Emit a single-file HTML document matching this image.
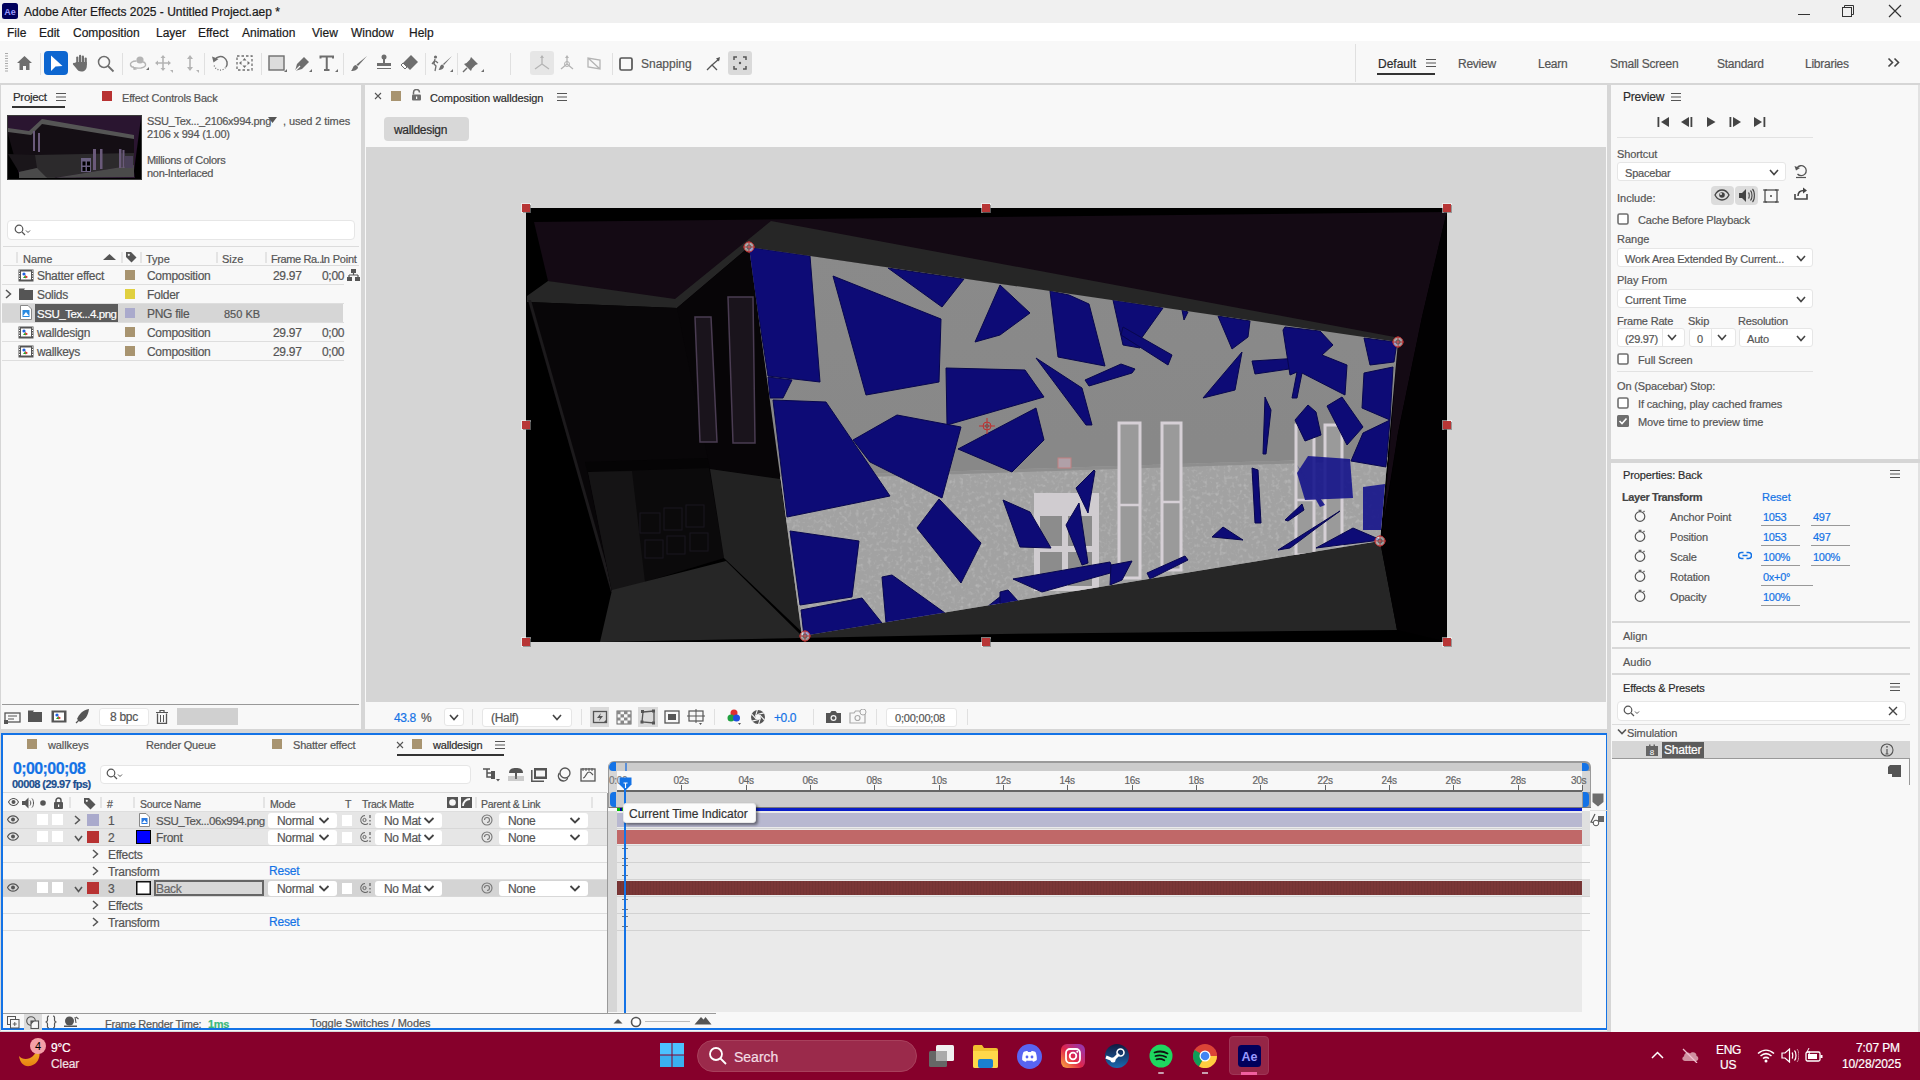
<!DOCTYPE html><html><head><meta charset="utf-8"><title>AE</title><style>
*{margin:0;padding:0;box-sizing:border-box}
html,body{width:1920px;height:1080px;overflow:hidden;background:#d6d6d6;font-family:"Liberation Sans",sans-serif}
.a{position:absolute}
.t{position:absolute;white-space:nowrap;line-height:1.15;-webkit-text-stroke:0.2px currentColor}
</style></head><body><div class="a" style="left:0px;top:0px;width:1920px;height:23px;background:#f0f0f0;"></div>
<svg class="a" style="left:2px;top:3px;" width="16" height="16" viewBox="0 0 16 16"><rect x="0" y="0" width="16" height="16" rx="2.5" fill="#00005b"/><text x="8" y="12" font-size="9" font-weight="bold" fill="#9999ff" text-anchor="middle" font-family="Liberation Sans">Ae</text></svg>
<div class="t" style="left:24px;top:5.5px;font-size:12px;color:#1a1a1a;">Adobe After Effects 2025 - Untitled Project.aep *</div>
<svg class="a" style="left:1797px;top:4px;" width="14" height="14" viewBox="0 0 14 14"><path d="M1 10.5H13" stroke="#333" stroke-width="1"/></svg>
<svg class="a" style="left:1841px;top:4px;" width="14" height="14" viewBox="0 0 14 14"><rect x="1.5" y="3.5" width="9" height="9" fill="none" stroke="#333"/><path d="M3.5 3.5V1.5H12.5V10.5H10.5" fill="none" stroke="#333"/></svg>
<svg class="a" style="left:1887px;top:3px;" width="16" height="16" viewBox="0 0 16 16"><path d="M2 2L14 14M14 2L2 14" stroke="#333" stroke-width="1.2"/></svg>
<div class="a" style="left:0px;top:23px;width:1920px;height:18px;background:#ffffff;"></div>
<div class="t" style="left:7px;top:27.0px;font-size:12px;color:#1a1a1a;">File</div>
<div class="t" style="left:39px;top:27.0px;font-size:12px;color:#1a1a1a;">Edit</div>
<div class="t" style="left:73px;top:27.0px;font-size:12px;color:#1a1a1a;">Composition</div>
<div class="t" style="left:156px;top:27.0px;font-size:12px;color:#1a1a1a;">Layer</div>
<div class="t" style="left:198px;top:27.0px;font-size:12px;color:#1a1a1a;">Effect</div>
<div class="t" style="left:242px;top:27.0px;font-size:12px;color:#1a1a1a;">Animation</div>
<div class="t" style="left:312px;top:27.0px;font-size:12px;color:#1a1a1a;">View</div>
<div class="t" style="left:351px;top:27.0px;font-size:12px;color:#1a1a1a;">Window</div>
<div class="t" style="left:409px;top:27.0px;font-size:12px;color:#1a1a1a;">Help</div>
<div class="a" style="left:0px;top:41px;width:1920px;height:42px;background:#f8f8f8;"></div>
<div class="a" style="left:0px;top:83px;width:1920px;height:2px;background:#d6d6d6;"></div>
<svg class="a" style="left:5px;top:53px;" width="4" height="20" viewBox="0 0 4 20"><rect x="0" y="0.0" width="3" height="1" fill="#aaa"/><rect x="0" y="2.5" width="3" height="1" fill="#aaa"/><rect x="0" y="5.0" width="3" height="1" fill="#aaa"/><rect x="0" y="7.5" width="3" height="1" fill="#aaa"/><rect x="0" y="10.0" width="3" height="1" fill="#aaa"/><rect x="0" y="12.5" width="3" height="1" fill="#aaa"/><rect x="0" y="15.0" width="3" height="1" fill="#aaa"/><rect x="0" y="17.5" width="3" height="1" fill="#aaa"/></svg>
<svg class="a" style="left:16px;top:55px;" width="17" height="16" viewBox="0 0 17 16"><path d="M8.5 1L1 8H3.5V15H7V11H10V15H13.5V8H16Z" fill="#6e6e6e"/></svg>
<div class="a" style="left:40px;top:53px;width:1px;height:22px;background:#e0e0e0;"></div>
<svg class="a" style="left:44px;top:51px;" width="24" height="24" viewBox="0 0 24 24"><rect width="24" height="24" rx="4" fill="#0d66d0"/><path d="M7 4.5V20L11.5 15.5L18.5 15Z" fill="#fff"/></svg>
<svg class="a" style="left:72px;top:54px;" width="17" height="18" viewBox="0 0 17 18"><g fill="#6e6e6e"><rect x="4.2" y="2.5" width="2.2" height="8" rx="1.1"/><rect x="7" y="0.8" width="2.2" height="9" rx="1.1"/><rect x="9.8" y="1.5" width="2.2" height="9" rx="1.1"/><rect x="12.6" y="3.5" width="2.2" height="8" rx="1.1"/><path d="M4.2 8H14.8V12C14.8 15.5 12.5 17.5 9.5 17.5C7 17.5 5.5 16.5 4 14L1 10.5A1.2 1.2 0 0 1 2.8 9Z"/></g></svg>
<svg class="a" style="left:97px;top:55px;" width="18" height="18" viewBox="0 0 18 18"><circle cx="7" cy="7" r="5.5" fill="none" stroke="#6e6e6e" stroke-width="1.5"/><path d="M11 11L16.5 16.5" stroke="#6e6e6e" stroke-width="1.8"/></svg>
<div class="a" style="left:122px;top:53px;width:1px;height:22px;background:#e0e0e0;"></div>
<svg class="a" style="left:129px;top:55px;" width="20" height="18" viewBox="0 0 20 18"><circle cx="11" cy="5" r="3.6" fill="#b4b4b4"/><path d="M7.5 6C3 6 1 8 1.5 10C2 12.5 7 13.5 12 13C15.5 12.5 17 11 16.5 9C16 7.5 14.5 7 14 7" fill="none" stroke="#b4b4b4" stroke-width="1.4"/><path d="M4 11L8 14.5L4.5 15Z" fill="#b4b4b4"/><path d="M17 15L20 15L20 12Z" fill="#6e6e6e"/></svg>
<svg class="a" style="left:155px;top:55px;" width="18" height="18" viewBox="0 0 18 18"><path d="M8 1V15M1 8H15" stroke="#b4b4b4" stroke-width="1.6"/><path d="M8 0L5.5 3H10.5ZM8 16L5.5 13H10.5ZM0 8L3 5.5V10.5ZM16 8L13 5.5V10.5Z" fill="#b4b4b4"/><path d="M15 15L18 15L18 18Z" fill="#b4b4b4"/></svg>
<svg class="a" style="left:183px;top:55px;" width="16" height="18" viewBox="0 0 16 18"><path d="M7 2V14" stroke="#b4b4b4" stroke-width="1.6"/><path d="M7 0L4 4H10ZM7 16L4 12H10Z" fill="#b4b4b4"/><path d="M13 15L16 15L16 18Z" fill="#b4b4b4"/></svg>
<div class="a" style="left:204px;top:53px;width:1px;height:22px;background:#e0e0e0;"></div>
<svg class="a" style="left:211px;top:54px;" width="18" height="18" viewBox="0 0 18 18"><path d="M4 5.5A6.5 6.5 0 1 1 15 13" fill="none" stroke="#6e6e6e" stroke-width="1.5"/><path d="M14.5 13.5A6.5 6.5 0 0 1 3 11" fill="none" stroke="#6e6e6e" stroke-width="1.2" stroke-dasharray="1 1.6"/><path d="M1 2.5L2.5 8.5L7.5 5Z" fill="#6e6e6e"/></svg>
<svg class="a" style="left:236px;top:55px;" width="18" height="17" viewBox="0 0 18 17"><rect x="1" y="1" width="15" height="14" fill="none" stroke="#6e6e6e" stroke-width="1.3" stroke-dasharray="2.5 2"/><path d="M8.5 3L6.5 5.5H10.5ZM8.5 13L6.5 10.5H10.5ZM3 8L5.5 6V10ZM14 8L11.5 6V10Z" fill="#6e6e6e"/></svg>
<div class="a" style="left:261px;top:53px;width:1px;height:22px;background:#e0e0e0;"></div>
<svg class="a" style="left:268px;top:55px;" width="19" height="18" viewBox="0 0 19 18"><rect x="1" y="1" width="15" height="14" fill="#dcdcdc" stroke="#6e6e6e" stroke-width="1.4"/><path d="M16 17L19 17L19 14Z" fill="#6e6e6e"/></svg>
<svg class="a" style="left:293px;top:55px;" width="19" height="18" viewBox="0 0 19 18"><path d="M2 16L4 9L11 2L16 7L9 14Z" fill="#6e6e6e"/><path d="M2 16L7 11" stroke="#f8f8f8" stroke-width="1.2"/><path d="M16 17L19 17L19 14Z" fill="#6e6e6e"/></svg>
<svg class="a" style="left:319px;top:55px;" width="19" height="18" viewBox="0 0 19 18"><path d="M1.5 3.5V1.5H14V3.5M7.75 1.5V15M5 15H10.5" fill="none" stroke="#6e6e6e" stroke-width="2"/><path d="M16 17L19 17L19 14Z" fill="#6e6e6e"/></svg>
<div class="a" style="left:343px;top:53px;width:1px;height:22px;background:#e0e0e0;"></div>
<svg class="a" style="left:350px;top:55px;" width="18" height="18" viewBox="0 0 18 18"><path d="M17 1L8 11L6.5 9.5Z" fill="#6e6e6e"/><path d="M6 10C3 10 3 14 1 16C5 16 8 14.5 8 12Z" fill="#6e6e6e"/></svg>
<svg class="a" style="left:375px;top:54px;" width="18" height="18" viewBox="0 0 18 18"><circle cx="9" cy="3" r="2.5" fill="#6e6e6e"/><path d="M9 4V9" stroke="#6e6e6e" stroke-width="2"/><rect x="2" y="9" width="14" height="3" fill="#6e6e6e"/><path d="M2 14.5H16" stroke="#6e6e6e" stroke-width="1"/></svg>
<svg class="a" style="left:400px;top:54px;" width="19" height="18" viewBox="0 0 19 18"><path d="M11 1L18 8L10 16L3 9Z" fill="#6e6e6e"/><path d="M3 9L7 13L5 15L1 11Z" fill="#fff" stroke="#6e6e6e" stroke-width="1"/></svg>
<div class="a" style="left:425px;top:53px;width:1px;height:22px;background:#e0e0e0;"></div>
<svg class="a" style="left:431px;top:55px;" width="22" height="18" viewBox="0 0 22 18"><circle cx="4.5" cy="2" r="1.6" fill="#6e6e6e"/><path d="M4 4L3 9L5 11L4 16M3.5 6L1 9M4.5 6L7 8" stroke="#6e6e6e" stroke-width="1.3" fill="none"/><path d="M21 1L13 10L12 9Z" fill="#6e6e6e"/><path d="M11.5 9.5C9 9.5 9 13 7.5 15C11 15 13 13.5 13 11Z" fill="#6e6e6e"/><path d="M19 17L22 17L22 14Z" fill="#6e6e6e"/></svg>
<div class="a" style="left:457px;top:53px;width:1px;height:22px;background:#e0e0e0;"></div>
<svg class="a" style="left:462px;top:55px;" width="22" height="18" viewBox="0 0 22 18"><path d="M9 2L16 9L13.5 10L10 13.5L9 16L2 9L4.5 8L8 4.5Z" fill="#6e6e6e" transform="rotate(0)"/><path d="M5 13L1 17" stroke="#6e6e6e" stroke-width="1.5"/><path d="M19 17L22 17L22 14Z" fill="#6e6e6e"/></svg>
<div class="a" style="left:510px;top:53px;width:1px;height:22px;background:#e0e0e0;"></div>
<svg class="a" style="left:530px;top:51px;" width="24" height="24" viewBox="0 0 24 24"><rect width="24" height="24" rx="3" fill="#e6e6e6"/><path d="M12 5V13L5 18M12 13L19 18" stroke="#b4b4b4" stroke-width="1.3" fill="none"/><path d="M12 4L10 7H14Z" fill="#b4b4b4"/></svg>
<svg class="a" style="left:558px;top:54px;" width="18" height="18" viewBox="0 0 18 18"><path d="M9 3V10L3 15M9 10L15 15" stroke="#b4b4b4" stroke-width="1.3" fill="none"/><circle cx="9" cy="10" r="2.5" fill="none" stroke="#b4b4b4"/><path d="M9 1L7 4H11Z" fill="#b4b4b4"/></svg>
<svg class="a" style="left:585px;top:55px;" width="18" height="17" viewBox="0 0 18 17"><path d="M3 3L15 14M3 3V12L15 14V5Z" stroke="#b4b4b4" stroke-width="1.3" fill="none"/></svg>
<div class="a" style="left:612px;top:53px;width:1px;height:22px;background:#e0e0e0;"></div>
<svg class="a" style="left:619px;top:57px;" width="14" height="14" viewBox="0 0 14 14"><rect x="1" y="1" width="12" height="12" rx="1.5" fill="none" stroke="#555" stroke-width="1.7"/></svg>
<div class="t" style="left:641px;top:58.0px;font-size:12px;color:#555;">Snapping</div>
<svg class="a" style="left:706px;top:56px;" width="16" height="16" viewBox="0 0 16 16"><path d="M1 14L6 9L11 14M6 9L13 3" stroke="#555" stroke-width="1.3" fill="none"/><path d="M14 1L10 2.5L13 5.5Z" fill="#555"/></svg>
<svg class="a" style="left:728px;top:51px;" width="24" height="24" viewBox="0 0 24 24"><rect width="24" height="24" rx="3" fill="#dadada"/><path d="M6 9V6H9M15 6H18V9M18 15V18H15M9 18H6V15" stroke="#555" stroke-width="1.5" fill="none"/><circle cx="12" cy="12" r="1.2" fill="#555"/></svg>
<div class="a" style="left:1355px;top:44px;width:1px;height:38px;background:#e0e0e0;"></div>
<div class="t" style="left:1378px;top:58.0px;font-size:12px;color:#2c2c2c;">Default</div>
<svg class="a" style="left:1426px;top:58px;" width="10" height="10" viewBox="0 0 10 10"><path d="M0 1.5H10M0 5H10M0 8.5H10" stroke="#555" stroke-width="1.2"/></svg>
<div class="a" style="left:1377px;top:73px;width:58px;height:2px;background:#333;"></div>
<div class="t" style="left:1458px;top:58.0px;font-size:12px;color:#555;letter-spacing:-0.25px">Review</div>
<div class="t" style="left:1538px;top:58.0px;font-size:12px;color:#555;letter-spacing:-0.25px">Learn</div>
<div class="t" style="left:1610px;top:58.0px;font-size:12px;color:#555;letter-spacing:-0.25px">Small Screen</div>
<div class="t" style="left:1717px;top:58.0px;font-size:12px;color:#555;letter-spacing:-0.25px">Standard</div>
<div class="t" style="left:1805px;top:58.0px;font-size:12px;color:#555;letter-spacing:-0.25px">Libraries</div>
<svg class="a" style="left:1887px;top:57px;" width="13" height="12" viewBox="0 0 13 12"><path d="M1.5 1.5L5.5 5.5L1.5 9.5M7.5 1.5L11.5 5.5L7.5 9.5" stroke="#444" stroke-width="1.6" fill="none"/></svg>
<div class="a" style="left:1px;top:85px;width:360px;height:644px;background:#f8f8f8;"></div>
<div class="a" style="left:365px;top:85px;width:1242px;height:644px;background:#f8f8f8;"></div>
<div class="a" style="left:1611px;top:85px;width:309px;height:374px;background:#f8f8f8;"></div>
<div class="a" style="left:1611px;top:463px;width:309px;height:569px;background:#f8f8f8;"></div>
<div class="a" style="left:1918px;top:85px;width:2px;height:947px;background:#e2e2e2;"></div>
<div class="a" style="left:1px;top:733px;width:1606px;height:298px;background:#f8f8f8;"></div>
<div class="a" style="left:0px;top:1032px;width:1920px;height:48px;background:#86002b;"></div>
<div class="t" style="left:13px;top:91.3px;font-size:11.5px;color:#2c2c2c;letter-spacing:-0.3px">Project</div>
<svg class="a" style="left:56px;top:92px;" width="10" height="10" viewBox="0 0 10 10"><path d="M0 1.5H10M0 5H10M0 8.5H10" stroke="#555" stroke-width="1.2"/></svg>
<div class="a" style="left:12px;top:106px;width:53px;height:2px;background:#333;"></div>
<div class="a" style="left:102px;top:91px;width:10px;height:10px;background:#b83232;"></div>
<div class="t" style="left:122px;top:91.5px;font-size:11px;color:#555;letter-spacing:-0.2px">Effect Controls Back</div>
<svg class="a" style="left:7px;top:115px;" width="135" height="65" viewBox="0 0 135 65"><rect x="0" y="0" width="135" height="65" fill="#3a3a3a"/>
<g transform="translate(1,1)">
<rect x="0" y="0" width="133" height="63" fill="#2a1530"/>
<polygon points="0,14 21,16 34,5 126,21 126,40 27,40 0,40" fill="#140e14"/>
<polygon points="0,12 21,15 34,3 126,19 126,23 34,8 23,19 0,16" fill="#555"/>
<polygon points="27,39 126,37 126,49 40,63 11,56" fill="#2c2a2c"/>
<polygon points="0,18 11,58 11,63 0,63" fill="#000"/>
<polygon points="0,38 27,39 29,52 11,56" fill="#1a161a"/>
<polygon points="11,56 29,52 40,63 126,49 126,61 11,62" fill="#4a4a4a"/><rect x="0" y="62" width="133" height="1" fill="#000"/>
<polygon points="133,2 133,63 127,63 126,55" fill="#000"/>
<g fill="#6a5a7a"><rect x="85" y="33" width="3" height="21"/><rect x="92" y="33" width="2.5" height="20"/><rect x="111" y="33" width="2.5" height="19"/><rect x="114.5" y="34" width="2" height="18"/><rect x="25" y="15" width="2" height="20"/><rect x="30" y="17" width="2" height="19"/></g>
<rect x="73" y="42" width="10" height="14" fill="#6a6080"/><rect x="74.5" y="45.5" width="3" height="4" fill="#000"/><rect x="79" y="45.5" width="3" height="4" fill="#000"/><rect x="74.5" y="51" width="3" height="4" fill="#000"/><rect x="79" y="51" width="3" height="4" fill="#000"/>
<rect x="117" y="40" width="8" height="12" fill="#4a4058"/>
</g></svg>
<div class="t" style="left:147px;top:114.5px;font-size:11px;color:#555;letter-spacing:-0.3px">SSU_Tex..._2106x994.png</div>
<svg class="a" style="left:268px;top:117px;" width="9" height="6" viewBox="0 0 9 6"><path d="M0 0H9L4.5 6Z" fill="#555"/></svg>
<div class="t" style="left:283px;top:114.5px;font-size:11px;color:#555;letter-spacing:-0.1px">, used 2 times</div>
<div class="t" style="left:147px;top:127.5px;font-size:11px;color:#555;letter-spacing:-0.2px">2106 x 994 (1.00)</div>
<div class="t" style="left:147px;top:153.5px;font-size:11px;color:#555;letter-spacing:-0.3px">Millions of Colors</div>
<div class="t" style="left:147px;top:166.5px;font-size:11px;color:#555;letter-spacing:-0.3px">non-Interlaced</div>
<div class="a" style="left:7px;top:220px;width:348px;height:20px;background:#fff;border:1px solid #e6e6e6;border-radius:4px"></div>
<svg class="a" style="left:14px;top:224px;" width="20" height="12" viewBox="0 0 20 12"><circle cx="5" cy="5" r="3.8" fill="none" stroke="#555" stroke-width="1.2"/><path d="M8 8L11 11" stroke="#555" stroke-width="1.2"/><path d="M12 6.5L14 8.5L16 6.5" stroke="#555" fill="none"/></svg>
<div class="a" style="left:3px;top:246px;width:356px;height:1px;background:#dcdcdc;"></div>
<div class="a" style="left:16px;top:252px;width:2px;height:11px;background:#e4e4e4;"></div>
<div class="a" style="left:121px;top:252px;width:2px;height:11px;background:#e4e4e4;"></div>
<div class="a" style="left:140px;top:252px;width:2px;height:11px;background:#e4e4e4;"></div>
<div class="a" style="left:216px;top:252px;width:2px;height:11px;background:#e4e4e4;"></div>
<div class="a" style="left:265px;top:252px;width:2px;height:11px;background:#e4e4e4;"></div>
<div class="t" style="left:23px;top:252.5px;font-size:11px;color:#555;">Name</div>
<svg class="a" style="left:103px;top:254px;" width="13" height="6" viewBox="0 0 13 6"><path d="M0 6L6.5 0L13 6Z" fill="#555"/></svg>
<svg class="a" style="left:125px;top:251px;" width="12" height="12" viewBox="0 0 12 12"><path d="M1 1H6L11.5 6.5L6.5 11.5L1 6Z" fill="#555"/><circle cx="3.8" cy="3.8" r="1.1" fill="#f8f8f8"/></svg>
<div class="t" style="left:146px;top:252.5px;font-size:11px;color:#555;">Type</div>
<div class="t" style="left:222px;top:252.5px;font-size:11px;color:#555;">Size</div>
<div class="t" style="left:271px;top:252.5px;font-size:11px;color:#555;letter-spacing:-0.4px">Frame Ra...</div>
<div class="t" style="left:321px;top:252.5px;font-size:11px;color:#555;letter-spacing:-0.2px">In Point</div>
<div class="a" style="left:3px;top:265px;width:356px;height:1px;background:#dcdcdc;"></div>
<div class="a" style="left:2px;top:304px;width:341px;height:18px;background:#d6d6d6;"></div>
<svg class="a" style="left:18px;top:269px;" width="16" height="13" viewBox="0 0 16 13"><rect x="0.5" y="0.5" width="15" height="12" fill="#555"/><rect x="3" y="2.5" width="10" height="8" fill="#fff"/><path d="M1.5 1.5v1M1.5 4v1M1.5 6.5v1M1.5 9v1M14.5 1.5v1M14.5 4v1M14.5 6.5v1M14.5 9v1" stroke="#fff"/><circle cx="6" cy="5" r="1.6" fill="#2060e0"/><path d="M7 6L10 8L7.5 9.5Z" fill="#e02020"/><path d="M5 9L7 6.5L8 9Z" fill="#20a020"/></svg>
<div class="t" style="left:37px;top:269.5px;font-size:12px;color:#555;letter-spacing:-0.3px">Shatter effect</div>
<div class="a" style="left:125px;top:270px;width:10px;height:10px;background:#a89470;"></div>
<div class="t" style="left:147px;top:269.5px;font-size:12px;color:#555;letter-spacing:-0.3px">Composition</div>
<div class="t" style="left:273px;top:269.5px;font-size:12px;color:#555;letter-spacing:-0.3px">29.97</div>
<div class="t" style="left:322px;top:269.5px;font-size:12px;color:#555;letter-spacing:-0.3px">0;00</div>
<div class="a" style="left:2px;top:284px;width:342px;height:1px;background:#dedede;"></div>
<svg class="a" style="left:19px;top:288px;" width="14" height="12" viewBox="0 0 14 12"><path d="M0 2H5L6 0.5H0ZM0 2H14V12H0Z" fill="#555"/></svg>
<svg class="a" style="left:4px;top:289px;" width="8" height="10" viewBox="0 0 8 10"><path d="M2 1L6.5 5L2 9" stroke="#555" stroke-width="1.5" fill="none"/></svg>
<div class="t" style="left:37px;top:288.5px;font-size:12px;color:#555;letter-spacing:-0.3px">Solids</div>
<div class="a" style="left:125px;top:289px;width:10px;height:10px;background:#e0d040;"></div>
<div class="t" style="left:147px;top:288.5px;font-size:12px;color:#555;letter-spacing:-0.3px">Folder</div>
<div class="a" style="left:2px;top:303px;width:342px;height:1px;background:#dedede;"></div>
<svg class="a" style="left:20px;top:305px;" width="12" height="15" viewBox="0 0 12 15"><path d="M0.5 0.5H8L11.5 4V14.5H0.5Z" fill="#fff" stroke="#888"/><rect x="2.5" y="5" width="7" height="7" fill="#2a8ae0"/><path d="M3 11L6 7L9 11Z" fill="#fff"/></svg>
<div class="a" style="left:35px;top:304px;width:83px;height:18px;background:#5c5c5c;"></div>
<div class="t" style="left:37px;top:307.8px;font-size:11.5px;color:#fff;letter-spacing:-0.45px">SSU_Tex...4.png</div>
<div class="a" style="left:125px;top:308px;width:10px;height:10px;background:#aaaacc;"></div>
<div class="t" style="left:147px;top:307.5px;font-size:12px;color:#555;letter-spacing:-0.3px">PNG file</div>
<div class="t" style="left:224px;top:308.0px;font-size:11px;color:#555;">850 KB</div>
<div class="a" style="left:2px;top:322px;width:342px;height:1px;background:#dedede;"></div>
<svg class="a" style="left:18px;top:326px;" width="16" height="13" viewBox="0 0 16 13"><rect x="0.5" y="0.5" width="15" height="12" fill="#555"/><rect x="3" y="2.5" width="10" height="8" fill="#fff"/><path d="M1.5 1.5v1M1.5 4v1M1.5 6.5v1M1.5 9v1M14.5 1.5v1M14.5 4v1M14.5 6.5v1M14.5 9v1" stroke="#fff"/><circle cx="6" cy="5" r="1.6" fill="#2060e0"/><path d="M7 6L10 8L7.5 9.5Z" fill="#e02020"/><path d="M5 9L7 6.5L8 9Z" fill="#20a020"/></svg>
<div class="t" style="left:37px;top:326.5px;font-size:12px;color:#555;letter-spacing:-0.3px">walldesign</div>
<div class="a" style="left:125px;top:327px;width:10px;height:10px;background:#a89470;"></div>
<div class="t" style="left:147px;top:326.5px;font-size:12px;color:#555;letter-spacing:-0.3px">Composition</div>
<div class="t" style="left:273px;top:326.5px;font-size:12px;color:#555;letter-spacing:-0.3px">29.97</div>
<div class="t" style="left:322px;top:326.5px;font-size:12px;color:#555;letter-spacing:-0.3px">0;00</div>
<div class="a" style="left:2px;top:341px;width:342px;height:1px;background:#dedede;"></div>
<svg class="a" style="left:18px;top:345px;" width="16" height="13" viewBox="0 0 16 13"><rect x="0.5" y="0.5" width="15" height="12" fill="#555"/><rect x="3" y="2.5" width="10" height="8" fill="#fff"/><path d="M1.5 1.5v1M1.5 4v1M1.5 6.5v1M1.5 9v1M14.5 1.5v1M14.5 4v1M14.5 6.5v1M14.5 9v1" stroke="#fff"/><circle cx="6" cy="5" r="1.6" fill="#2060e0"/><path d="M7 6L10 8L7.5 9.5Z" fill="#e02020"/><path d="M5 9L7 6.5L8 9Z" fill="#20a020"/></svg>
<div class="t" style="left:37px;top:345.5px;font-size:12px;color:#555;letter-spacing:-0.3px">wallkeys</div>
<div class="a" style="left:125px;top:346px;width:10px;height:10px;background:#a89470;"></div>
<div class="t" style="left:147px;top:345.5px;font-size:12px;color:#555;letter-spacing:-0.3px">Composition</div>
<div class="t" style="left:273px;top:345.5px;font-size:12px;color:#555;letter-spacing:-0.3px">29.97</div>
<div class="t" style="left:322px;top:345.5px;font-size:12px;color:#555;letter-spacing:-0.3px">0;00</div>
<div class="a" style="left:2px;top:360px;width:342px;height:1px;background:#dedede;"></div>
<svg class="a" style="left:347px;top:269px;" width="13" height="12" viewBox="0 0 13 12"><rect x="4" y="0" width="5" height="4" fill="#555"/><path d="M6.5 4V6M2 6H11M2 6V8M11 6V8" stroke="#555" stroke-width="1.2" fill="none"/><rect x="0" y="8" width="5" height="4" fill="#555"/><rect x="8" y="8" width="5" height="4" fill="#555"/></svg>
<div class="a" style="left:2px;top:704px;width:357px;height:1px;background:#999;"></div>
<svg class="a" style="left:4px;top:710px;" width="17" height="14" viewBox="0 0 17 14"><rect x="1" y="3" width="15" height="9" fill="none" stroke="#555" stroke-width="1.3"/><path d="M4 6H13M4 9H10" stroke="#555"/><rect x="0" y="10" width="4" height="4" fill="#555"/></svg>
<svg class="a" style="left:28px;top:710px;" width="14" height="12" viewBox="0 0 14 12"><path d="M0 2H5L6 0.5H0ZM0 2H14V12H0Z" fill="#555"/></svg>
<svg class="a" style="left:51px;top:710px;" width="16" height="13" viewBox="0 0 16 13"><rect x="0.5" y="0.5" width="15" height="12" fill="#555"/><rect x="3" y="2.5" width="10" height="8" fill="#fff"/><circle cx="6" cy="5" r="1.6" fill="#2060e0"/><path d="M7 6L10 8L7.5 9.5Z" fill="#e02020"/><path d="M5 9L7 6.5L8 9Z" fill="#20a020"/></svg>
<svg class="a" style="left:75px;top:709px;" width="15" height="15" viewBox="0 0 15 15"><path d="M14 0C8 1 4 5 2 10L5 13C10 11 13 7 14 0Z" fill="#555"/><path d="M1 14L4 11" stroke="#555" stroke-width="1.3"/></svg>
<div class="a" style="left:99px;top:708px;width:50px;height:18px;background:#fff;border:1px solid #e8e8e8;border-radius:3px"></div>
<div class="t" style="left:110px;top:711.0px;font-size:12px;color:#555;letter-spacing:-0.3px">8 bpc</div>
<svg class="a" style="left:156px;top:710px;" width="12" height="14" viewBox="0 0 12 14"><path d="M0 2.5H12M4 2.5V0.5H8V2.5" stroke="#555" stroke-width="1.2" fill="none"/><path d="M1.5 3.5V13.5H10.5V3.5" stroke="#555" stroke-width="1.3" fill="none"/><path d="M4.5 5V12M7.5 5V12" stroke="#555"/></svg>
<div class="a" style="left:177px;top:708px;width:61px;height:17px;background:#d0d0d0;"></div>
<svg class="a" style="left:374px;top:92px;" width="8" height="8" viewBox="0 0 8 8"><path d="M1 1L7 7M7 1L1 7" stroke="#555" stroke-width="1.1"/></svg>
<div class="a" style="left:391px;top:91px;width:10px;height:10px;background:#a89470;"></div>
<svg class="a" style="left:411px;top:89px;" width="11" height="12" viewBox="0 0 11 12"><path d="M2.5 5.5V3.5a3 3 0 0 1 6 0" stroke="#6e6e6e" stroke-width="1.5" fill="none"/><rect x="1" y="5.5" width="9" height="6" rx="1" fill="#6e6e6e"/><rect x="5" y="7.5" width="1.2" height="2.5" fill="#f8f8f8"/></svg>
<div class="t" style="left:430px;top:91.5px;font-size:11px;color:#2c2c2c;letter-spacing:-0.1px">Composition walldesign</div>
<svg class="a" style="left:557px;top:92px;" width="10" height="10" viewBox="0 0 10 10"><path d="M0 1.5H10M0 5H10M0 8.5H10" stroke="#555" stroke-width="1.2"/></svg>
<div class="a" style="left:384px;top:117px;width:85px;height:24px;background:#d8d8d8;border-radius:4px"></div>
<div class="t" style="left:394px;top:123.5px;font-size:12px;color:#2c2c2c;letter-spacing:-0.3px">walldesign</div>
<div class="a" style="left:366px;top:147px;width:1240px;height:555px;background:#d5d5d5;"></div>
<svg class="a" style="left:526px;top:208px;overflow:hidden" width="921" height="434" viewBox="526 208 921 434"><defs>
<linearGradient id="wg" x1="0" y1="247" x2="0" y2="636" gradientUnits="userSpaceOnUse">
<stop offset="0" stop-color="#8a8a8a"/><stop offset="0.5" stop-color="#888888"/><stop offset="1" stop-color="#888888"/></linearGradient>
<filter id="nz" x="0" y="0" width="100%" height="100%"><feTurbulence type="fractalNoise" baseFrequency="0.25" numOctaves="2" seed="4"/><feColorMatrix type="matrix" values="0 0 0 0 1  0 0 0 0 1  0 0 0 0 1  0 0 0 2.2 -1.1"/><feComposite in2="SourceGraphic" operator="in"/></filter>
<clipPath id="wc"><polygon points="749,247 1398,342 1380,541 802,636"/></clipPath>
</defs>
<rect x="526" y="208" width="921" height="434" fill="#000"/>
<polygon points="534,222 1447,212 1446,215 1422,317 1398,433 1384,520 1398,342 749,247 677,308 548,281" fill="#140a14"/>
<polygon points="527,296 548,281 675,299 771,221 1400,338 1398,343 749,247 677,308 527,302" fill="#262626"/>
<polygon points="528,302 677,308 749,247 803,633 724,558 612,592" fill="#080608"/>
<polygon points="528,300 531,300 614,592 611,592" fill="#1c1a1c"/>
<polygon points="585,462 709,458 724,558 612,592 588,475" fill="#050405"/>
<polygon points="588,472 709,468 724,558 612,592" fill="#0b0a0b"/><polygon points="588,472 632,471 645,582 612,592" fill="#151415"/>
<polygon points="677,308 749,247 780,479 710,469" fill="#070507"/>
<polygon points="710,469 780,479 803,633 724,558" fill="#222222"/>
<g fill="#1a141c" stroke="#4a3c52" stroke-width="1.5"><polygon points="695,317 711,317 717,442 700,442"/><polygon points="728,297 753,297 755,443 733,443"/></g>
<g fill="none" stroke="#1a1620" stroke-width="1"><rect x="640" y="513" width="20" height="20"/><rect x="664" y="508" width="18" height="22"/><rect x="686" y="505" width="18" height="22"/><rect x="645" y="540" width="18" height="18"/><rect x="667" y="536" width="18" height="18"/><rect x="690" y="533" width="18" height="18"/></g>
<polygon points="612,590 726,561 802,636 1380,541 1397,630 1000,634 600,642" fill="#262626"/>
<polygon points="1446,215 1447,642 1397,630 1380,541 1391,480 1398,433 1422,317" fill="#020102"/>
<polygon points="749,247 1398,342 1380,541 802,636" fill="url(#wg)"/>
<g clip-path="url(#wc)">
<polygon points="740,478 1400,457 1400,640 740,640" fill="#a2a2a2"/><polygon points="740,478 1400,457 1400,640 740,640" fill="#fff" filter="url(#nz)" opacity="0.25"/><polygon points="740,478 1400,457 1400,460 740,481" fill="#8e8e8e"/>
<g fill="#9a9a9a" stroke="#d6d0d6" stroke-width="3">
<rect x="1119" y="423" width="21" height="155"/><rect x="1162" y="423" width="19" height="147"/>
<rect x="1296" y="425" width="18" height="130"/><rect x="1325" y="425" width="17" height="120"/>
</g>
<g stroke="#d6d0d6" stroke-width="2.5"><path d="M1120 505H1139M1163 502H1180M1297 500H1313"/></g>
<rect x="1034" y="493" width="65" height="98" fill="#d0ccd0"/>
<rect x="1040" y="516" width="22" height="30" fill="#8c8c8c"/><rect x="1068" y="516" width="24" height="30" fill="#8c8c8c"/>
<rect x="1040" y="552" width="22" height="34" fill="#8c8c8c"/><rect x="1068" y="552" width="24" height="34" fill="#8c8c8c"/>
<rect x="1058" y="458" width="13" height="10" fill="#b0a0a8" stroke="#c08080" stroke-width="1"/>

<g fill="#0d0b76" stroke="#08074e" stroke-width="1">
<polygon points="946,368 1025,370 1044,397 947,425"/>
<polygon points="958,449 1036,408 1044,440 1012,472"/>

<polygon points="748,247 810,256 820,382 768,376"/>
<polygon points="768,377 792,380 783,398 770,398"/>
<polygon points="773,400 826,402 890,496 787,517"/>
<polygon points="833,276 941,319 939,382 866,395"/>
<polygon points="888,268 964,279 942,307"/>
<polygon points="1000,285 1030,313 1000,335 975,342"/>
<polygon points="897,415 961,427 942,498 870,462 853,440"/>
<polygon points="1050,291 1069,295 1089,304 1105,366 1058,357"/>
<polygon points="1113,300 1163,308 1138,343 1140,348 1123,345"/>
<polygon points="1123,327 1172,355 1168,365 1121,335"/>
<polygon points="1182,310 1188,312 1184,320"/>
<polygon points="1218,316 1250,321 1248,337 1232,349"/>
<polygon points="1242,352 1235,390 1203,398"/>
<polygon points="1252,361 1300,358 1303,367 1255,374"/>
<polygon points="1036,358 1082,388 1092,425 1086,425"/>
<polygon points="1085,380 1121,364 1135,369 1132,373 1089,386"/>
<polygon points="917,528 939,499 981,543 961,583"/>
<polygon points="790,531 859,541 852,597 800,605"/>
<polygon points="801,610 862,598 882,623 804,636"/>
<polygon points="882,577 892,575 945,613 886,623"/>
<polygon points="987,607 1006,592 1010,604"/>
<polygon points="1285,327 1320,331 1333,345 1322,355 1347,365 1345,395 1302,373 1297,398 1292,398 1297,372 1290,375 1283,330"/>
<polygon points="1364,338 1397,342 1394,362 1370,365"/>
<polygon points="1364,373 1393,367 1390,420 1362,408"/>
<polygon points="1308,405 1316,412 1321,435 1305,441 1295,420"/>
<polygon points="1327,406 1342,397 1363,427 1347,445"/>
<polygon points="1363,433 1390,420 1386,467 1351,461"/>
<polygon points="1265,397 1271,410 1266,454 1263,454"/>
<polygon points="1252,468 1258,470 1261,523 1255,523"/>
<polygon points="1285,520 1302,504 1304,510 1288,521"/>
<polygon points="1278,550 1340,511 1318,527 1290,548"/>
<polygon points="1316,548 1353,528 1381,540"/>
<polygon points="1212,537 1223,527 1243,540"/>
<polygon points="1003,500 1030,512 1051,548 1020,547"/>
<polygon points="1076,488 1094,470 1095,471 1088,513"/>
<polygon points="1066,525 1079,503 1088,563 1082,565"/>
<polygon points="1013,579 1110,562 1114,572 1042,592"/>
<polygon points="1000,592 1008,590 1018,601 1000,604"/>
<polygon points="1111,565 1132,561 1122,580 1110,585"/>
<polygon points="1147,573 1185,556 1188,560 1150,579"/>
</g>
<g fill="#12108a" opacity="0.88">
<polygon points="1308,456 1350,459 1353,498 1305,500 1297,473"/>
<polygon points="1363,487 1385,484 1383,530 1363,530"/>
<polygon points="1297,465 1325,505 1320,507"/>
</g>
</g>
</svg>
<div class="a" style="left:522px;top:204px;width:8px;height:8px;background:#b83636;box-shadow:1px 1px 0 rgba(0,0,0,0.35),0 0 0 1px rgba(255,255,255,0.5)"></div>
<div class="a" style="left:982px;top:204px;width:8px;height:8px;background:#b83636;box-shadow:1px 1px 0 rgba(0,0,0,0.35),0 0 0 1px rgba(255,255,255,0.5)"></div>
<div class="a" style="left:1443px;top:204px;width:8px;height:8px;background:#b83636;box-shadow:1px 1px 0 rgba(0,0,0,0.35),0 0 0 1px rgba(255,255,255,0.5)"></div>
<div class="a" style="left:522px;top:421px;width:8px;height:8px;background:#b83636;box-shadow:1px 1px 0 rgba(0,0,0,0.35),0 0 0 1px rgba(255,255,255,0.5)"></div>
<div class="a" style="left:1443px;top:421px;width:8px;height:8px;background:#b83636;box-shadow:1px 1px 0 rgba(0,0,0,0.35),0 0 0 1px rgba(255,255,255,0.5)"></div>
<div class="a" style="left:522px;top:638px;width:8px;height:8px;background:#b83636;box-shadow:1px 1px 0 rgba(0,0,0,0.35),0 0 0 1px rgba(255,255,255,0.5)"></div>
<div class="a" style="left:982px;top:638px;width:8px;height:8px;background:#b83636;box-shadow:1px 1px 0 rgba(0,0,0,0.35),0 0 0 1px rgba(255,255,255,0.5)"></div>
<div class="a" style="left:1443px;top:638px;width:8px;height:8px;background:#b83636;box-shadow:1px 1px 0 rgba(0,0,0,0.35),0 0 0 1px rgba(255,255,255,0.5)"></div>
<svg class="a" style="left:743px;top:241px;" width="12" height="12" viewBox="0 0 12 12"><circle cx="6" cy="6" r="5" fill="rgba(255,255,255,0.6)" stroke="#c03030" stroke-width="1"/><path d="M6 0V12M0 6H12" stroke="#c03030" stroke-width="0.9"/><circle cx="6" cy="6" r="2" fill="none" stroke="#333" stroke-width="0.6"/></svg>
<svg class="a" style="left:1392px;top:336px;" width="12" height="12" viewBox="0 0 12 12"><circle cx="6" cy="6" r="5" fill="rgba(255,255,255,0.6)" stroke="#c03030" stroke-width="1"/><path d="M6 0V12M0 6H12" stroke="#c03030" stroke-width="0.9"/><circle cx="6" cy="6" r="2" fill="none" stroke="#333" stroke-width="0.6"/></svg>
<svg class="a" style="left:1374px;top:535px;" width="12" height="12" viewBox="0 0 12 12"><circle cx="6" cy="6" r="5" fill="rgba(255,255,255,0.6)" stroke="#c03030" stroke-width="1"/><path d="M6 0V12M0 6H12" stroke="#c03030" stroke-width="0.9"/><circle cx="6" cy="6" r="2" fill="none" stroke="#333" stroke-width="0.6"/></svg>
<svg class="a" style="left:799px;top:630px;" width="12" height="12" viewBox="0 0 12 12"><circle cx="6" cy="6" r="5" fill="rgba(255,255,255,0.6)" stroke="#c03030" stroke-width="1"/><path d="M6 0V12M0 6H12" stroke="#c03030" stroke-width="0.9"/><circle cx="6" cy="6" r="2" fill="none" stroke="#333" stroke-width="0.6"/></svg>
<svg class="a" style="left:979px;top:418px;" width="16" height="16" viewBox="0 0 16 16"><circle cx="8" cy="8" r="4" fill="none" stroke="#c03030" stroke-width="1"/><path d="M8 0V16M0 8H16" stroke="#c03030" stroke-width="1"/><circle cx="8" cy="8" r="1.5" fill="none" stroke="#555" stroke-width="0.7"/></svg>
<div class="t" style="left:394px;top:711.5px;font-size:12px;color:#1473e6;letter-spacing:-0.4px">43.8</div>
<div class="t" style="left:421px;top:711.5px;font-size:12px;color:#555;">%</div>
<div class="a" style="left:444px;top:708px;width:20px;height:18px;background:#fff;border:1px solid #e6e6e6;border-radius:3px"></div>
<svg class="a" style="left:449px;top:713px;" width="10" height="8" viewBox="0 0 10 8"><path d="M1 2L5.0 6.5L9 2" stroke="#444" stroke-width="1.6" fill="none"/></svg>
<div class="a" style="left:472px;top:709px;width:1px;height:16px;background:#e0e0e0;"></div>
<div class="a" style="left:482px;top:708px;width:90px;height:19px;background:#fff;border:1px solid #e6e6e6;border-radius:3px"></div>
<div class="t" style="left:491px;top:711.5px;font-size:12px;color:#555;letter-spacing:-0.3px">(Half)</div>
<svg class="a" style="left:552px;top:713px;" width="10" height="8" viewBox="0 0 10 8"><path d="M1 2L5.0 6.5L9 2" stroke="#444" stroke-width="1.6" fill="none"/></svg>
<div class="a" style="left:581px;top:709px;width:1px;height:16px;background:#e0e0e0;"></div>
<div class="a" style="left:590px;top:707px;width:19px;height:20px;background:#dadada;"></div>
<svg class="a" style="left:592px;top:709px;" width="16" height="16" viewBox="0 0 16 16"><rect x="1.5" y="2.5" width="13" height="11" fill="none" stroke="#555" stroke-width="1.3"/><path d="M9 4L5 9H8L7 12L11 7H8Z" fill="#555"/><path d="M12 13L15 13L15 10Z" fill="#555"/></svg>
<svg class="a" style="left:616px;top:710px;" width="16" height="15" viewBox="0 0 16 15"><rect x="1" y="1" width="14" height="13" fill="none" stroke="#666"/><path d="M1 1h3.5v3.2H1zM8 1h3.5v3.2H8zM4.5 4.2h3.5v3.2H4.5zM11.5 4.2H15v3.2h-3.5zM1 7.4h3.5v3.2H1zM8 7.4h3.5v3.2H8zM4.5 10.6h3.5V14H4.5zM11.5 10.6H15V14h-3.5z" fill="#888"/></svg>
<div class="a" style="left:638px;top:707px;width:20px;height:20px;background:#dadada;"></div>
<svg class="a" style="left:640px;top:709px;" width="16" height="16" viewBox="0 0 16 16"><path d="M3 3L14 2L14 14L2 13Z" fill="none" stroke="#555" stroke-width="1.3"/><rect x="1" y="1" width="3" height="3" fill="#555"/><rect x="12" y="0.5" width="3" height="3" fill="#555"/><rect x="12" y="12.5" width="3" height="3" fill="#555"/><rect x="0.5" y="11.5" width="3" height="3" fill="#555"/></svg>
<svg class="a" style="left:664px;top:710px;" width="16" height="14" viewBox="0 0 16 14"><rect x="1" y="1" width="14" height="12" fill="none" stroke="#555" stroke-width="1.3"/><rect x="4" y="4" width="8" height="6" fill="#555"/></svg>
<svg class="a" style="left:687px;top:708px;" width="18" height="18" viewBox="0 0 18 18"><rect x="2" y="3" width="14" height="10" fill="none" stroke="#555" stroke-width="1.2"/><path d="M9 1V15M0 8H18" stroke="#555" stroke-width="1"/><path d="M12 15L15 15L13.5 17Z" fill="#555"/></svg>
<div class="a" style="left:714px;top:709px;width:1px;height:16px;background:#e0e0e0;"></div>
<svg class="a" style="left:725px;top:708px;" width="18" height="18" viewBox="0 0 18 18"><circle cx="9" cy="5" r="3.5" fill="#e03030"/><circle cx="6" cy="10" r="3.5" fill="#20a040"/><circle cx="11.5" cy="10" r="3.5" fill="#2050e0"/><path d="M13 15L16 15L14.5 17Z" fill="#555"/></svg>
<svg class="a" style="left:750px;top:709px;" width="16" height="16" viewBox="0 0 16 16"><circle cx="8" cy="8" r="7" fill="#555"/><circle cx="8" cy="8" r="2.6" fill="#f8f8f8"/><path d="M10.51 8.67L8.63 15.17" stroke="#f8f8f8" stroke-width="1.1"/><path d="M8.67 10.51L2.10 12.13" stroke="#f8f8f8" stroke-width="1.1"/><path d="M6.16 9.84L1.47 4.96" stroke="#f8f8f8" stroke-width="1.1"/><path d="M5.49 7.33L7.37 0.83" stroke="#f8f8f8" stroke-width="1.1"/><path d="M7.33 5.49L13.90 3.87" stroke="#f8f8f8" stroke-width="1.1"/><path d="M9.84 6.16L14.53 11.04" stroke="#f8f8f8" stroke-width="1.1"/></svg>
<div class="t" style="left:774px;top:711.5px;font-size:12px;color:#1473e6;letter-spacing:-0.4px">+0.0</div>
<div class="a" style="left:813px;top:709px;width:1px;height:16px;background:#e0e0e0;"></div>
<svg class="a" style="left:825px;top:710px;" width="17" height="14" viewBox="0 0 17 14"><path d="M1 3H5L6.5 1H10.5L12 3H16V13H1Z" fill="#555"/><circle cx="8.5" cy="8" r="3" fill="#f8f8f8"/><circle cx="8.5" cy="8" r="1.8" fill="#555"/></svg>
<svg class="a" style="left:849px;top:709px;" width="18" height="16" viewBox="0 0 18 16"><path d="M1 4H5L6.5 2H10.5L12 4H16V14H1Z" fill="none" stroke="#aaa" stroke-width="1.2"/><circle cx="8.5" cy="9" r="2.5" fill="none" stroke="#aaa" stroke-width="1.2"/><circle cx="14" cy="3" r="3" fill="#f8f8f8" stroke="#aaa"/></svg>
<div class="a" style="left:876px;top:709px;width:1px;height:16px;background:#e0e0e0;"></div>
<div class="a" style="left:886px;top:708px;width:71px;height:19px;background:#fff;border:1px solid #e6e6e6;border-radius:3px"></div>
<div class="t" style="left:895px;top:712.0px;font-size:11px;color:#555;letter-spacing:-0.2px">0;00;00;08</div>
<div class="a" style="left:967px;top:709px;width:1px;height:16px;background:#e0e0e0;"></div>
<div class="t" style="left:1623px;top:91.0px;font-size:12px;color:#2c2c2c;letter-spacing:-0.2px">Preview</div>
<svg class="a" style="left:1671px;top:92px;" width="10" height="10" viewBox="0 0 10 10"><path d="M0 1.5H10M0 5H10M0 8.5H10" stroke="#555" stroke-width="1.2"/></svg>
<svg class="a" style="left:1657px;top:116px;" width="13" height="12" viewBox="0 0 13 12"><rect x="0.5" y="1" width="1.8" height="10" fill="#444"/><path d="M12 1V11L4 6Z" fill="#444"/></svg>
<svg class="a" style="left:1680px;top:116px;" width="13" height="12" viewBox="0 0 13 12"><path d="M9 1V11L1 6Z" fill="#444"/><rect x="10.5" y="1" width="1.8" height="10" fill="#444"/></svg>
<svg class="a" style="left:1705px;top:116px;" width="12" height="12" viewBox="0 0 12 12"><path d="M2 1V11L10.5 6Z" fill="#444"/></svg>
<svg class="a" style="left:1729px;top:116px;" width="13" height="12" viewBox="0 0 13 12"><rect x="0.5" y="1" width="1.8" height="10" fill="#444"/><path d="M4 1V11L12 6Z" fill="#444"/></svg>
<svg class="a" style="left:1753px;top:116px;" width="13" height="12" viewBox="0 0 13 12"><path d="M1 1V11L9 6Z" fill="#444"/><rect x="10.5" y="1" width="1.8" height="10" fill="#444"/></svg>
<div class="a" style="left:1617px;top:137px;width:196px;height:1px;background:#e2e2e2;"></div>
<div class="t" style="left:1617px;top:147.5px;font-size:11px;color:#555;letter-spacing:-0.1px">Shortcut</div>
<div class="a" style="left:1617px;top:162px;width:169px;height:19px;background:#fff;border:1px solid #e6e6e6;border-radius:3px"></div>
<div class="t" style="left:1625px;top:166.5px;font-size:11px;color:#555;letter-spacing:-0.2px">Spacebar</div>
<svg class="a" style="left:1769px;top:167.5px;" width="10" height="8" viewBox="0 0 10 8"><path d="M1 2L5.0 6.5L9 2" stroke="#444" stroke-width="1.6" fill="none"/></svg>
<svg class="a" style="left:1793px;top:163px;" width="16" height="16" viewBox="0 0 16 16"><path d="M4 5A5 5 0 1 1 4.5 11" fill="none" stroke="#555" stroke-width="1.3"/><path d="M1.5 3L3 7.5L7 5Z" fill="#555"/><path d="M3 14.5H13" stroke="#555" stroke-width="1.2"/></svg>
<div class="t" style="left:1617px;top:191.5px;font-size:11px;color:#555;">Include:</div>
<div class="a" style="left:1711px;top:186px;width:23px;height:19px;background:#dcdcdc;border-radius:4px"></div>
<div class="a" style="left:1735px;top:186px;width:23px;height:19px;background:#dcdcdc;border-radius:4px"></div>
<svg class="a" style="left:1714px;top:189px;" width="16" height="12" viewBox="0 0 16 12"><path d="M1 6C3 2 5.5 1 8 1C10.5 1 13 2 15 6C13 10 10.5 11 8 11C5.5 11 3 10 1 6Z" fill="none" stroke="#444" stroke-width="1.3"/><circle cx="8" cy="6" r="2.8" fill="#444"/><circle cx="7" cy="5" r="0.9" fill="#fff"/></svg>
<svg class="a" style="left:1738px;top:188px;" width="18" height="15" viewBox="0 0 18 15"><path d="M1 5H4L8 1V14L4 10H1Z" fill="#444"/><path d="M10.5 4.5C11.5 5.5 11.5 9.5 10.5 10.5M12.5 2.5C14.5 4.5 14.5 10.5 12.5 12.5M14.5 1C17 3.5 17 11.5 14.5 14" stroke="#444" stroke-width="1.1" fill="none"/></svg>
<svg class="a" style="left:1763px;top:188px;" width="16" height="16" viewBox="0 0 16 16"><rect x="2" y="2" width="12" height="12" fill="none" stroke="#444" stroke-width="1.2"/><path d="M0 2H4M12 2H16M0 14H4M12 14H16" stroke="#444"/><circle cx="8" cy="8" r="1" fill="#444"/></svg>
<svg class="a" style="left:1793px;top:186px;" width="16" height="16" viewBox="0 0 16 16"><path d="M2 8V13H14V8" fill="none" stroke="#444" stroke-width="1.6"/><path d="M5 10C5 6 8 4.5 11 4.5" fill="none" stroke="#444" stroke-width="1.5"/><path d="M10 1.5L14 4.5L10 7.5Z" fill="#444"/></svg>
<svg class="a" style="left:1617px;top:212.5px;" width="12" height="12" viewBox="0 0 12 12"><rect x="1" y="1" width="10" height="10" rx="1.5" fill="#fff" stroke="#6e6e6e" stroke-width="1.6"/></svg>
<div class="t" style="left:1638px;top:213.5px;font-size:11px;color:#555;letter-spacing:-0.15px">Cache Before Playback</div>
<div class="t" style="left:1617px;top:232.5px;font-size:11px;color:#555;">Range</div>
<div class="a" style="left:1617px;top:248px;width:196px;height:19px;background:#fff;border:1px solid #e6e6e6;border-radius:3px"></div>
<div class="t" style="left:1625px;top:252.5px;font-size:11px;color:#555;letter-spacing:-0.2px">Work Area Extended By Current...</div>
<svg class="a" style="left:1796px;top:253.5px;" width="10" height="8" viewBox="0 0 10 8"><path d="M1 2L5.0 6.5L9 2" stroke="#444" stroke-width="1.6" fill="none"/></svg>
<div class="t" style="left:1617px;top:273.5px;font-size:11px;color:#555;">Play From</div>
<div class="a" style="left:1617px;top:289px;width:196px;height:19px;background:#fff;border:1px solid #e6e6e6;border-radius:3px"></div>
<div class="t" style="left:1625px;top:293.5px;font-size:11px;color:#555;letter-spacing:-0.2px">Current Time</div>
<svg class="a" style="left:1796px;top:294.5px;" width="10" height="8" viewBox="0 0 10 8"><path d="M1 2L5.0 6.5L9 2" stroke="#444" stroke-width="1.6" fill="none"/></svg>
<div class="t" style="left:1617px;top:314.5px;font-size:11px;color:#555;letter-spacing:-0.2px">Frame Rate</div>
<div class="t" style="left:1688px;top:314.5px;font-size:11px;color:#555;">Skip</div>
<div class="t" style="left:1738px;top:314.5px;font-size:11px;color:#555;letter-spacing:-0.2px">Resolution</div>
<div class="a" style="left:1617px;top:328px;width:68px;height:19px;background:#fff;border:1px solid #e6e6e6;border-radius:3px"></div>
<div class="a" style="left:1662px;top:329px;width:1px;height:17px;background:#e6e6e6;"></div>
<div class="t" style="left:1625px;top:332.5px;font-size:11px;color:#555;letter-spacing:-0.3px">(29.97)</div>
<svg class="a" style="left:1667px;top:333px;" width="10" height="8" viewBox="0 0 10 8"><path d="M1 2L5.0 6.5L9 2" stroke="#444" stroke-width="1.6" fill="none"/></svg>
<div class="a" style="left:1689px;top:328px;width:47px;height:19px;background:#fff;border:1px solid #e6e6e6;border-radius:3px"></div>
<div class="a" style="left:1711px;top:329px;width:1px;height:17px;background:#e6e6e6;"></div>
<div class="t" style="left:1697px;top:332.5px;font-size:11px;color:#555;">0</div>
<svg class="a" style="left:1717px;top:333px;" width="10" height="8" viewBox="0 0 10 8"><path d="M1 2L5.0 6.5L9 2" stroke="#444" stroke-width="1.6" fill="none"/></svg>
<div class="a" style="left:1739px;top:328px;width:74px;height:19px;background:#fff;border:1px solid #e6e6e6;border-radius:3px"></div>
<div class="t" style="left:1747px;top:332.5px;font-size:11px;color:#555;letter-spacing:-0.2px">Auto</div>
<svg class="a" style="left:1796px;top:333.5px;" width="10" height="8" viewBox="0 0 10 8"><path d="M1 2L5.0 6.5L9 2" stroke="#444" stroke-width="1.6" fill="none"/></svg>
<svg class="a" style="left:1617px;top:352.5px;" width="12" height="12" viewBox="0 0 12 12"><rect x="1" y="1" width="10" height="10" rx="1.5" fill="#fff" stroke="#6e6e6e" stroke-width="1.6"/></svg>
<div class="t" style="left:1638px;top:353.5px;font-size:11px;color:#555;letter-spacing:-0.1px">Full Screen</div>
<div class="a" style="left:1617px;top:371px;width:196px;height:1px;background:#e2e2e2;"></div>
<div class="t" style="left:1617px;top:379.5px;font-size:11px;color:#555;letter-spacing:-0.15px">On (Spacebar) Stop:</div>
<svg class="a" style="left:1617px;top:396.5px;" width="12" height="12" viewBox="0 0 12 12"><rect x="1" y="1" width="10" height="10" rx="1.5" fill="#fff" stroke="#6e6e6e" stroke-width="1.6"/></svg>
<div class="t" style="left:1638px;top:397.5px;font-size:11px;color:#555;letter-spacing:-0.15px">If caching, play cached frames</div>
<svg class="a" style="left:1617px;top:414.5px;" width="12" height="12" viewBox="0 0 12 12"><rect x="0" y="0" width="12" height="12" rx="1.5" fill="#6e6e6e"/><path d="M2.5 6L5 8.5L9.5 3.5" stroke="#fff" stroke-width="1.6" fill="none"/></svg>
<div class="t" style="left:1638px;top:415.5px;font-size:11px;color:#555;letter-spacing:-0.1px">Move time to preview time</div>
<div class="a" style="left:1611px;top:459px;width:309px;height:4px;background:#d6d6d6;"></div>
<div class="t" style="left:1623px;top:468.5px;font-size:11px;color:#2c2c2c;letter-spacing:-0.1px">Properties: Back</div>
<svg class="a" style="left:1890px;top:469px;" width="10" height="10" viewBox="0 0 10 10"><path d="M0 1.5H10M0 5H10M0 8.5H10" stroke="#555" stroke-width="1.2"/></svg>
<div class="t" style="left:1622px;top:490.5px;font-size:11px;color:#444;font-weight:bold;letter-spacing:-0.4px">Layer Transform</div>
<div class="t" style="left:1762px;top:490.5px;font-size:11px;color:#1473e6;">Reset</div>
<svg class="a" style="left:1634px;top:509px;" width="12" height="13" viewBox="0 0 12 13"><circle cx="6" cy="7.5" r="4.8" fill="none" stroke="#555" stroke-width="1.2"/><path d="M4.5 1.2H7.5M6 1.2V2.7M9.5 3L10.5 2" stroke="#555" stroke-width="1.1"/></svg>
<div class="t" style="left:1670px;top:510.5px;font-size:11px;color:#555;letter-spacing:-0.15px">Anchor Point</div>
<div class="t" style="left:1763px;top:510.5px;font-size:11px;color:#1473e6;letter-spacing:-0.3px">1053</div>
<div class="a" style="left:1761px;top:525px;width:39px;height:1px;background:#999;"></div>
<div class="t" style="left:1813px;top:510.5px;font-size:11px;color:#1473e6;letter-spacing:-0.3px">497</div>
<div class="a" style="left:1811px;top:525px;width:39px;height:1px;background:#999;"></div>
<svg class="a" style="left:1634px;top:529px;" width="12" height="13" viewBox="0 0 12 13"><circle cx="6" cy="7.5" r="4.8" fill="none" stroke="#555" stroke-width="1.2"/><path d="M4.5 1.2H7.5M6 1.2V2.7M9.5 3L10.5 2" stroke="#555" stroke-width="1.1"/></svg>
<div class="t" style="left:1670px;top:530.5px;font-size:11px;color:#555;letter-spacing:-0.15px">Position</div>
<div class="t" style="left:1763px;top:530.5px;font-size:11px;color:#1473e6;letter-spacing:-0.3px">1053</div>
<div class="a" style="left:1761px;top:545px;width:39px;height:1px;background:#999;"></div>
<div class="t" style="left:1813px;top:530.5px;font-size:11px;color:#1473e6;letter-spacing:-0.3px">497</div>
<div class="a" style="left:1811px;top:545px;width:39px;height:1px;background:#999;"></div>
<svg class="a" style="left:1634px;top:549px;" width="12" height="13" viewBox="0 0 12 13"><circle cx="6" cy="7.5" r="4.8" fill="none" stroke="#555" stroke-width="1.2"/><path d="M4.5 1.2H7.5M6 1.2V2.7M9.5 3L10.5 2" stroke="#555" stroke-width="1.1"/></svg>
<div class="t" style="left:1670px;top:550.5px;font-size:11px;color:#555;letter-spacing:-0.15px">Scale</div>
<div class="t" style="left:1763px;top:550.5px;font-size:11px;color:#1473e6;letter-spacing:-0.3px">100%</div>
<div class="a" style="left:1761px;top:565px;width:39px;height:1px;background:#999;"></div>
<div class="t" style="left:1813px;top:550.5px;font-size:11px;color:#1473e6;letter-spacing:-0.3px">100%</div>
<div class="a" style="left:1811px;top:565px;width:39px;height:1px;background:#999;"></div>
<svg class="a" style="left:1634px;top:569px;" width="12" height="13" viewBox="0 0 12 13"><circle cx="6" cy="7.5" r="4.8" fill="none" stroke="#555" stroke-width="1.2"/><path d="M4.5 1.2H7.5M6 1.2V2.7M9.5 3L10.5 2" stroke="#555" stroke-width="1.1"/></svg>
<div class="t" style="left:1670px;top:570.5px;font-size:11px;color:#555;letter-spacing:-0.15px">Rotation</div>
<div class="t" style="left:1763px;top:570.5px;font-size:11px;color:#1473e6;letter-spacing:-0.3px">0x+0°</div>
<div class="a" style="left:1761px;top:585px;width:52px;height:1px;background:#999;"></div>
<svg class="a" style="left:1634px;top:589px;" width="12" height="13" viewBox="0 0 12 13"><circle cx="6" cy="7.5" r="4.8" fill="none" stroke="#555" stroke-width="1.2"/><path d="M4.5 1.2H7.5M6 1.2V2.7M9.5 3L10.5 2" stroke="#555" stroke-width="1.1"/></svg>
<div class="t" style="left:1670px;top:590.5px;font-size:11px;color:#555;letter-spacing:-0.15px">Opacity</div>
<div class="t" style="left:1763px;top:590.5px;font-size:11px;color:#1473e6;letter-spacing:-0.3px">100%</div>
<div class="a" style="left:1761px;top:605px;width:39px;height:1px;background:#999;"></div>
<svg class="a" style="left:1738px;top:551px;" width="14" height="9" viewBox="0 0 14 9"><path d="M5.5 1.5H3.5a3 3 0 0 0 0 6H5.5M8.5 1.5H10.5a3 3 0 0 1 0 6H8.5M4.5 4.5H9.5" stroke="#1473e6" stroke-width="1.5" fill="none"/></svg>
<div class="a" style="left:1612px;top:621px;width:298px;height:2px;background:#d8d8d8;"></div>
<div class="t" style="left:1623px;top:629.5px;font-size:11px;color:#555;">Align</div>
<div class="a" style="left:1612px;top:647px;width:298px;height:2px;background:#d8d8d8;"></div>
<div class="t" style="left:1623px;top:655.5px;font-size:11px;color:#555;">Audio</div>
<div class="a" style="left:1612px;top:673px;width:298px;height:2px;background:#d8d8d8;"></div>
<div class="t" style="left:1623px;top:681.5px;font-size:11px;color:#2c2c2c;letter-spacing:-0.15px">Effects &amp; Presets</div>
<svg class="a" style="left:1890px;top:682px;" width="10" height="10" viewBox="0 0 10 10"><path d="M0 1.5H10M0 5H10M0 8.5H10" stroke="#555" stroke-width="1.2"/></svg>
<div class="a" style="left:1617px;top:701px;width:289px;height:20px;background:#fff;border:1px solid #e6e6e6;border-radius:4px"></div>
<svg class="a" style="left:1623px;top:705px;" width="20" height="12" viewBox="0 0 20 12"><circle cx="5" cy="5" r="3.8" fill="none" stroke="#555" stroke-width="1.2"/><path d="M8 8L11 11" stroke="#555" stroke-width="1.2"/><path d="M12 6.5L14 8.5L16 6.5" stroke="#555" fill="none"/></svg>
<svg class="a" style="left:1888px;top:706px;" width="10" height="10" viewBox="0 0 10 10"><path d="M1 1L9 9M9 1L1 9" stroke="#444" stroke-width="1.4"/></svg>
<div class="a" style="left:1612px;top:724px;width:298px;height:1px;background:#dcdcdc;"></div>
<svg class="a" style="left:1617px;top:728px;" width="10" height="8" viewBox="0 0 10 8"><path d="M1 1.5L5 5.5L9 1.5" stroke="#555" stroke-width="1.6" fill="none"/></svg>
<div class="t" style="left:1627px;top:727.0px;font-size:11px;color:#555;letter-spacing:-0.1px">Simulation</div>
<div class="a" style="left:1612px;top:741px;width:298px;height:18px;background:#d6d6d6;"></div>
<div class="a" style="left:1612px;top:758px;width:298px;height:1px;background:#999;"></div>
<svg class="a" style="left:1646px;top:744px;" width="12" height="12" viewBox="0 0 12 12"><path d="M0 2H3V0.5H4.5V2H7.5V0.5H9V2H12V12H0Z" fill="#666"/><text x="6" y="10.5" font-size="8" fill="#fff" text-anchor="middle" font-family="Liberation Sans">8</text></svg>
<div class="a" style="left:1662px;top:742px;width:42px;height:16px;background:#5c5c5c;"></div>
<div class="t" style="left:1664px;top:744.0px;font-size:12px;color:#fff;letter-spacing:-0.2px">Shatter</div>
<svg class="a" style="left:1880px;top:743px;" width="14" height="14" viewBox="0 0 14 14"><circle cx="7" cy="7" r="6" fill="none" stroke="#555" stroke-width="1.1"/><path d="M7 6V11M5.5 11H8.5" stroke="#555" stroke-width="1.2"/><circle cx="7" cy="3.8" r="0.9" fill="#555"/></svg>
<div class="a" style="left:1909px;top:759px;width:1px;height:26px;background:#999;"></div>
<svg class="a" style="left:1888px;top:765px;" width="13" height="13" viewBox="0 0 13 13"><path d="M2 0H13V12H4V9H0V2Z" fill="#555"/><path d="M0 9L4 13V9Z" fill="#f8f8f8"/></svg>
<div class="a" style="left:1px;top:733px;width:1606px;height:297px;border:2px solid #1473e6;border-right-width:1.5px"></div>
<div class="a" style="left:27px;top:739px;width:10px;height:10px;background:#a89470;"></div>
<div class="t" style="left:48px;top:738.5px;font-size:11px;color:#555;letter-spacing:-0.1px">wallkeys</div>
<div class="t" style="left:146px;top:738.5px;font-size:11px;color:#555;letter-spacing:-0.2px">Render Queue</div>
<div class="a" style="left:272px;top:739px;width:10px;height:10px;background:#a89470;"></div>
<div class="t" style="left:293px;top:738.5px;font-size:11px;color:#555;letter-spacing:-0.2px">Shatter effect</div>
<svg class="a" style="left:396px;top:741px;" width="8" height="8" viewBox="0 0 8 8"><path d="M1 1L7 7M7 1L1 7" stroke="#555" stroke-width="1.1"/></svg>
<div class="a" style="left:412px;top:739px;width:10px;height:10px;background:#a89470;"></div>
<div class="t" style="left:433px;top:738.5px;font-size:11px;color:#2c2c2c;letter-spacing:-0.2px">walldesign</div>
<svg class="a" style="left:495px;top:740px;" width="10" height="10" viewBox="0 0 10 10"><path d="M0 1.5H10M0 5H10M0 8.5H10" stroke="#555" stroke-width="1.2"/></svg>
<div class="a" style="left:397px;top:754px;width:107px;height:2px;background:#333;"></div>
<div class="t" style="left:13px;top:760.2px;font-size:16px;color:#1473e6;font-weight:bold;letter-spacing:-0.6px">0;00;00;08</div>
<div class="t" style="left:12px;top:778.0px;font-size:11px;color:#1b4f8f;font-weight:bold;letter-spacing:-0.55px">00008 (29.97 fps)</div>
<div class="a" style="left:100px;top:765px;width:371px;height:19px;background:#fff;border:1px solid #e6e6e6;border-radius:4px"></div>
<svg class="a" style="left:106px;top:768px;" width="20" height="12" viewBox="0 0 20 12"><circle cx="5" cy="5" r="3.8" fill="none" stroke="#555" stroke-width="1.2"/><path d="M8 8L11 11" stroke="#555" stroke-width="1.2"/><path d="M12 6.5L14 8.5L16 6.5" stroke="#555" fill="none"/></svg>
<svg class="a" style="left:483px;top:767px;" width="18" height="15" viewBox="0 0 18 15"><path d="M0 2H7M4 2V6H9M4 6V10H9" stroke="#555" stroke-width="1.5" fill="none"/><rect x="8" y="4" width="4" height="4" fill="#555"/><rect x="8" y="8" width="4" height="4" fill="#555"/><path d="M13 12L17 12L15 14.5Z" fill="#555"/></svg>
<svg class="a" style="left:508px;top:767px;" width="16" height="15" viewBox="0 0 16 15"><path d="M1 6C1 2 4 1 8 1C12 1 15 2 15 6Z" fill="#555"/><path d="M8 6V12" stroke="#555" stroke-width="1.6"/><rect x="0" y="9" width="16" height="5" fill="#ccc"/><path d="M8 6V12" stroke="#555" stroke-width="1.6"/></svg>
<svg class="a" style="left:531px;top:767px;" width="16" height="15" viewBox="0 0 16 15"><rect x="3" y="1" width="13" height="11" fill="#555"/><rect x="5" y="3.5" width="9" height="6" fill="#f8f8f8"/><path d="M0.8 3V14.2H13" stroke="#555" stroke-width="1.5" fill="none"/></svg>
<svg class="a" style="left:556px;top:767px;" width="15" height="15" viewBox="0 0 15 15"><ellipse cx="9" cy="6" rx="5" ry="5" fill="none" stroke="#555" stroke-width="1.3"/><path d="M3.5 6C1 9 3 14 7.5 14C10 14 11.5 12 11.5 11" fill="none" stroke="#555" stroke-width="1.3"/></svg>
<svg class="a" style="left:580px;top:767px;" width="16" height="15" viewBox="0 0 16 15"><rect x="1" y="2" width="14" height="12" fill="none" stroke="#555" stroke-width="1.3"/><path d="M3 4L3 1M6 4V1M9 4V1M12 4V1" stroke="#555"/><path d="M3 11C6 11 6 5 9 5C11 5 12 7 13 8" stroke="#555" stroke-width="1.2" fill="none"/></svg>
<div class="a" style="left:3px;top:792px;width:604px;height:1px;background:#d8d8d8;"></div>
<svg class="a" style="left:8px;top:798px;" width="11" height="8" viewBox="0 0 11 8"><path d="M0.5 4C2 1 4 0.5 5.5 0.5C7 0.5 9 1 10.5 4C9 7 7 7.5 5.5 7.5C4 7.5 2 7 0.5 4Z" fill="none" stroke="#555" stroke-width="1.1"/><circle cx="5.5" cy="4" r="2" fill="#555"/></svg>
<svg class="a" style="left:22px;top:797px;" width="13" height="12" viewBox="0 0 13 12"><path d="M0 4H3L6.5 0.5V11.5L3 8H0Z" fill="#555"/><path d="M8 3.5C9 4.5 9 7.5 8 8.5M10 1.5C12 3.5 12 8.5 10 10.5" stroke="#555" stroke-width="1" fill="none"/></svg>
<svg class="a" style="left:40px;top:800px;" width="6" height="6" viewBox="0 0 6 6"><circle cx="3" cy="3" r="2.8" fill="#555"/></svg>
<svg class="a" style="left:53px;top:797px;" width="11" height="12" viewBox="0 0 11 12"><path d="M3 5V3.5a2.5 2.5 0 0 1 5 0V5" stroke="#555" stroke-width="1.5" fill="none"/><rect x="1" y="5" width="9" height="7" rx="1" fill="#555"/><rect x="5" y="7.5" width="1.2" height="2.5" fill="#f8f8f8"/></svg>
<div class="a" style="left:69px;top:797px;width:2px;height:11px;background:#e4e4e4;"></div>
<div class="a" style="left:100px;top:797px;width:2px;height:11px;background:#e4e4e4;"></div>
<div class="a" style="left:133px;top:797px;width:2px;height:11px;background:#e4e4e4;"></div>
<div class="a" style="left:263px;top:797px;width:2px;height:11px;background:#e4e4e4;"></div>
<div class="a" style="left:475px;top:797px;width:2px;height:11px;background:#e4e4e4;"></div>
<div class="a" style="left:591px;top:797px;width:2px;height:11px;background:#e4e4e4;"></div>
<svg class="a" style="left:83px;top:797px;" width="13" height="13" viewBox="0 0 13 13"><path d="M1 1H6L12.5 7.5L7.5 12.5L1 6Z" fill="#555"/><circle cx="3.8" cy="3.8" r="1.1" fill="#f8f8f8"/></svg>
<div class="t" style="left:107px;top:798.3px;font-size:10.5px;color:#555;">#</div>
<div class="t" style="left:140px;top:798.3px;font-size:10.5px;color:#555;letter-spacing:-0.3px">Source Name</div>
<div class="t" style="left:270px;top:798.3px;font-size:10.5px;color:#555;letter-spacing:-0.2px">Mode</div>
<div class="t" style="left:345px;top:798.3px;font-size:10.5px;color:#555;">T</div>
<div class="t" style="left:362px;top:798.3px;font-size:10.5px;color:#555;letter-spacing:-0.3px">Track Matte</div>
<svg class="a" style="left:447px;top:797px;" width="11" height="11" viewBox="0 0 11 11"><rect x="0" y="0" width="11" height="11" fill="#555"/><circle cx="5.5" cy="5.5" r="3.3" fill="#f8f8f8"/></svg>
<svg class="a" style="left:461px;top:797px;" width="11" height="11" viewBox="0 0 11 11"><rect x="0" y="0" width="11" height="11" fill="#555"/><path d="M9 2C5 2 2 5 2 9" stroke="#f8f8f8" stroke-width="1.8" fill="none"/></svg>
<div class="t" style="left:481px;top:798.3px;font-size:10.5px;color:#555;letter-spacing:-0.3px">Parent &amp; Link</div>
<div class="a" style="left:3px;top:811px;width:604px;height:1px;background:#dedede;"></div>
<div class="a" style="left:3px;top:812px;width:604px;height:17px;background:#e6e6e6;"></div>
<div class="a" style="left:3px;top:828px;width:604px;height:1px;background:#d8d8d8;"></div>
<svg class="a" style="left:7px;top:815px;" width="12" height="9" viewBox="0 0 12 9"><path d="M0.5 4.5C2 1.5 4 0.8 6 0.8C8 0.8 10 1.5 11.5 4.5C10 7.5 8 8.2 6 8.2C4 8.2 2 7.5 0.5 4.5Z" fill="none" stroke="#555" stroke-width="1.2"/><circle cx="6" cy="4.5" r="2" fill="#555"/></svg>
<div class="a" style="left:37px;top:814px;width:11px;height:11px;background:#fff;"></div>
<div class="a" style="left:52px;top:814px;width:11px;height:11px;background:#fff;"></div>
<svg class="a" style="left:73px;top:815px;" width="8" height="10" viewBox="0 0 8 10"><path d="M2 1L6.5 5L2 9" stroke="#555" stroke-width="1.5" fill="none"/></svg>
<div class="a" style="left:87px;top:814px;width:12px;height:12px;background:#aaaacc;"></div>
<div class="t" style="left:108px;top:814.5px;font-size:12px;color:#555;">1</div>
<svg class="a" style="left:139px;top:813px;" width="11" height="14" viewBox="0 0 11 14"><path d="M0.5 0.5H7L10.5 4V13.5H0.5Z" fill="#fff" stroke="#888"/><rect x="2.5" y="5" width="6" height="6" fill="#2a7ae0"/><path d="M3 10L5.5 7L8 10Z" fill="#fff"/></svg>
<div class="t" style="left:156px;top:814.8px;font-size:11.5px;color:#555;letter-spacing:-0.45px">SSU_Tex...06x994.png</div>
<div class="a" style="left:268px;top:813px;width:69px;height:15px;background:#fff;border-radius:3px"></div>
<div class="t" style="left:277px;top:815.0px;font-size:12px;color:#555;letter-spacing:-0.3px">Normal</div>
<svg class="a" style="left:318px;top:816px;" width="12" height="9" viewBox="0 0 12 9"><path d="M1.5 2L6 6.5L10.5 2" stroke="#444" stroke-width="1.8" fill="none"/></svg>
<div class="a" style="left:342px;top:815px;width:10px;height:11px;background:#fff;"></div>
<svg class="a" style="left:359px;top:814px;" width="13" height="12" viewBox="0 0 13 12"><path d="M6 1.5A4.5 4.5 0 1 0 9 9.5" fill="none" stroke="#666" stroke-width="1.1"/><circle cx="5.5" cy="6" r="1.6" fill="none" stroke="#666"/><path d="M11 1V4M11 6V7.5M11 9.5V11" stroke="#666" stroke-width="1.3"/></svg>
<div class="a" style="left:375px;top:813px;width:67px;height:15px;background:#fff;border-radius:3px"></div>
<div class="t" style="left:384px;top:815.0px;font-size:12px;color:#555;letter-spacing:-0.3px">No Mat</div>
<svg class="a" style="left:423px;top:816px;" width="12" height="9" viewBox="0 0 12 9"><path d="M1.5 2L6 6.5L10.5 2" stroke="#444" stroke-width="1.8" fill="none"/></svg>
<svg class="a" style="left:481px;top:814px;" width="12" height="12" viewBox="0 0 12 12"><circle cx="6" cy="6" r="5" fill="none" stroke="#777" stroke-width="1.1"/><path d="M3.5 6A2.5 2.5 0 1 1 6 8.5" fill="none" stroke="#777" stroke-width="1.1"/></svg>
<div class="a" style="left:499px;top:813px;width:89px;height:15px;background:#fff;border-radius:3px"></div>
<div class="t" style="left:508px;top:815.0px;font-size:12px;color:#555;letter-spacing:-0.3px">None</div>
<svg class="a" style="left:569px;top:816px;" width="12" height="9" viewBox="0 0 12 9"><path d="M1.5 2L6 6.5L10.5 2" stroke="#444" stroke-width="1.8" fill="none"/></svg>
<div class="a" style="left:3px;top:829px;width:604px;height:17px;background:#e6e6e6;"></div>
<div class="a" style="left:3px;top:845px;width:604px;height:1px;background:#d8d8d8;"></div>
<svg class="a" style="left:7px;top:832px;" width="12" height="9" viewBox="0 0 12 9"><path d="M0.5 4.5C2 1.5 4 0.8 6 0.8C8 0.8 10 1.5 11.5 4.5C10 7.5 8 8.2 6 8.2C4 8.2 2 7.5 0.5 4.5Z" fill="none" stroke="#555" stroke-width="1.2"/><circle cx="6" cy="4.5" r="2" fill="#555"/></svg>
<div class="a" style="left:37px;top:831px;width:11px;height:11px;background:#fff;"></div>
<div class="a" style="left:52px;top:831px;width:11px;height:11px;background:#fff;"></div>
<svg class="a" style="left:74px;top:833.5px;" width="9" height="8" viewBox="0 0 9 8"><path d="M1 2L4.5 6.5L8 2" stroke="#555" stroke-width="1.6" fill="none"/></svg>
<div class="a" style="left:87px;top:831px;width:12px;height:12px;background:#b83232;"></div>
<div class="t" style="left:108px;top:831.5px;font-size:12px;color:#555;">2</div>
<svg class="a" style="left:136px;top:830px;" width="15" height="14" viewBox="0 0 15 14"><rect x="0.5" y="0.5" width="14" height="13" fill="#0000ff" stroke="#000"/></svg>
<div class="t" style="left:156px;top:831.5px;font-size:12px;color:#555;letter-spacing:-0.3px">Front</div>
<div class="a" style="left:268px;top:830px;width:69px;height:15px;background:#fff;border-radius:3px"></div>
<div class="t" style="left:277px;top:832.0px;font-size:12px;color:#555;letter-spacing:-0.3px">Normal</div>
<svg class="a" style="left:318px;top:833px;" width="12" height="9" viewBox="0 0 12 9"><path d="M1.5 2L6 6.5L10.5 2" stroke="#444" stroke-width="1.8" fill="none"/></svg>
<div class="a" style="left:342px;top:832px;width:10px;height:11px;background:#fff;"></div>
<svg class="a" style="left:359px;top:831px;" width="13" height="12" viewBox="0 0 13 12"><path d="M6 1.5A4.5 4.5 0 1 0 9 9.5" fill="none" stroke="#666" stroke-width="1.1"/><circle cx="5.5" cy="6" r="1.6" fill="none" stroke="#666"/><path d="M11 1V4M11 6V7.5M11 9.5V11" stroke="#666" stroke-width="1.3"/></svg>
<div class="a" style="left:375px;top:830px;width:67px;height:15px;background:#fff;border-radius:3px"></div>
<div class="t" style="left:384px;top:832.0px;font-size:12px;color:#555;letter-spacing:-0.3px">No Mat</div>
<svg class="a" style="left:423px;top:833px;" width="12" height="9" viewBox="0 0 12 9"><path d="M1.5 2L6 6.5L10.5 2" stroke="#444" stroke-width="1.8" fill="none"/></svg>
<svg class="a" style="left:481px;top:831px;" width="12" height="12" viewBox="0 0 12 12"><circle cx="6" cy="6" r="5" fill="none" stroke="#777" stroke-width="1.1"/><path d="M3.5 6A2.5 2.5 0 1 1 6 8.5" fill="none" stroke="#777" stroke-width="1.1"/></svg>
<div class="a" style="left:499px;top:830px;width:89px;height:15px;background:#fff;border-radius:3px"></div>
<div class="t" style="left:508px;top:832.0px;font-size:12px;color:#555;letter-spacing:-0.3px">None</div>
<svg class="a" style="left:569px;top:833px;" width="12" height="9" viewBox="0 0 12 9"><path d="M1.5 2L6 6.5L10.5 2" stroke="#444" stroke-width="1.8" fill="none"/></svg>
<div class="a" style="left:3px;top:862px;width:604px;height:1px;background:#dedede;"></div>
<svg class="a" style="left:91px;top:849px;" width="8" height="10" viewBox="0 0 8 10"><path d="M2 1L6.5 5L2 9" stroke="#555" stroke-width="1.5" fill="none"/></svg>
<div class="t" style="left:108px;top:848.5px;font-size:12px;color:#555;letter-spacing:-0.3px">Effects</div>
<div class="a" style="left:3px;top:879px;width:604px;height:1px;background:#dedede;"></div>
<svg class="a" style="left:91px;top:866px;" width="8" height="10" viewBox="0 0 8 10"><path d="M2 1L6.5 5L2 9" stroke="#555" stroke-width="1.5" fill="none"/></svg>
<div class="t" style="left:108px;top:865.5px;font-size:12px;color:#555;letter-spacing:-0.3px">Transform</div>
<div class="t" style="left:269px;top:865.0px;font-size:12px;color:#1473e6;letter-spacing:-0.2px">Reset</div>
<div class="a" style="left:3px;top:880px;width:604px;height:17px;background:#d4d4d4;"></div>
<div class="a" style="left:3px;top:896px;width:604px;height:1px;background:#d8d8d8;"></div>
<svg class="a" style="left:7px;top:883px;" width="12" height="9" viewBox="0 0 12 9"><path d="M0.5 4.5C2 1.5 4 0.8 6 0.8C8 0.8 10 1.5 11.5 4.5C10 7.5 8 8.2 6 8.2C4 8.2 2 7.5 0.5 4.5Z" fill="none" stroke="#555" stroke-width="1.2"/><circle cx="6" cy="4.5" r="2" fill="#555"/></svg>
<div class="a" style="left:37px;top:882px;width:11px;height:11px;background:#fff;"></div>
<div class="a" style="left:52px;top:882px;width:11px;height:11px;background:#fff;"></div>
<svg class="a" style="left:74px;top:884.5px;" width="9" height="8" viewBox="0 0 9 8"><path d="M1 2L4.5 6.5L8 2" stroke="#555" stroke-width="1.6" fill="none"/></svg>
<div class="a" style="left:87px;top:882px;width:12px;height:12px;background:#b83232;"></div>
<div class="t" style="left:108px;top:882.5px;font-size:12px;color:#555;">3</div>
<svg class="a" style="left:136px;top:881px;" width="15" height="14" viewBox="0 0 15 14"><rect x="0.75" y="0.75" width="13.5" height="12.5" fill="#fff" stroke="#111" stroke-width="1.5"/></svg>
<div class="a" style="left:154px;top:880px;width:110px;height:16px;background:#d8d8d8;border:2px solid #666"></div>
<div class="t" style="left:156px;top:882.5px;font-size:12px;color:#666;letter-spacing:-0.3px">Back</div>
<div class="a" style="left:268px;top:881px;width:69px;height:15px;background:#fff;border-radius:3px"></div>
<div class="t" style="left:277px;top:883.0px;font-size:12px;color:#555;letter-spacing:-0.3px">Normal</div>
<svg class="a" style="left:318px;top:884px;" width="12" height="9" viewBox="0 0 12 9"><path d="M1.5 2L6 6.5L10.5 2" stroke="#444" stroke-width="1.8" fill="none"/></svg>
<div class="a" style="left:342px;top:883px;width:10px;height:11px;background:#fff;"></div>
<svg class="a" style="left:359px;top:882px;" width="13" height="12" viewBox="0 0 13 12"><path d="M6 1.5A4.5 4.5 0 1 0 9 9.5" fill="none" stroke="#666" stroke-width="1.1"/><circle cx="5.5" cy="6" r="1.6" fill="none" stroke="#666"/><path d="M11 1V4M11 6V7.5M11 9.5V11" stroke="#666" stroke-width="1.3"/></svg>
<div class="a" style="left:375px;top:881px;width:67px;height:15px;background:#fff;border-radius:3px"></div>
<div class="t" style="left:384px;top:883.0px;font-size:12px;color:#555;letter-spacing:-0.3px">No Mat</div>
<svg class="a" style="left:423px;top:884px;" width="12" height="9" viewBox="0 0 12 9"><path d="M1.5 2L6 6.5L10.5 2" stroke="#444" stroke-width="1.8" fill="none"/></svg>
<svg class="a" style="left:481px;top:882px;" width="12" height="12" viewBox="0 0 12 12"><circle cx="6" cy="6" r="5" fill="none" stroke="#777" stroke-width="1.1"/><path d="M3.5 6A2.5 2.5 0 1 1 6 8.5" fill="none" stroke="#777" stroke-width="1.1"/></svg>
<div class="a" style="left:499px;top:881px;width:89px;height:15px;background:#fff;border-radius:3px"></div>
<div class="t" style="left:508px;top:883.0px;font-size:12px;color:#555;letter-spacing:-0.3px">None</div>
<svg class="a" style="left:569px;top:884px;" width="12" height="9" viewBox="0 0 12 9"><path d="M1.5 2L6 6.5L10.5 2" stroke="#444" stroke-width="1.8" fill="none"/></svg>
<div class="a" style="left:3px;top:913px;width:604px;height:1px;background:#dedede;"></div>
<svg class="a" style="left:91px;top:900px;" width="8" height="10" viewBox="0 0 8 10"><path d="M2 1L6.5 5L2 9" stroke="#555" stroke-width="1.5" fill="none"/></svg>
<div class="t" style="left:108px;top:899.5px;font-size:12px;color:#555;letter-spacing:-0.3px">Effects</div>
<div class="a" style="left:3px;top:930px;width:604px;height:1px;background:#dedede;"></div>
<svg class="a" style="left:91px;top:917px;" width="8" height="10" viewBox="0 0 8 10"><path d="M2 1L6.5 5L2 9" stroke="#555" stroke-width="1.5" fill="none"/></svg>
<div class="t" style="left:108px;top:916.5px;font-size:12px;color:#555;letter-spacing:-0.3px">Transform</div>
<div class="t" style="left:269px;top:916.0px;font-size:12px;color:#1473e6;letter-spacing:-0.2px">Reset</div>
<div class="a" style="left:607px;top:793px;width:1px;height:220px;background:#9a9a9a;"></div>
<div class="a" style="left:608px;top:761px;width:983px;height:47px;background:#9a9a9a;border-radius:6px 6px 0 0"></div>
<div class="a" style="left:609px;top:763px;width:973px;height:8px;background:#cccccc;"></div>
<div class="a" style="left:609px;top:762px;width:7px;height:9px;background:#1473e6;border-radius:5px 0 0 4px"></div>
<div class="a" style="left:1582px;top:763px;width:7px;height:8px;background:#1473e6;border-radius:0 5px 4px 0;"></div>
<div class="a" style="left:625px;top:763px;width:2px;height:8px;background:#5a8fd8;"></div>
<div class="a" style="left:609px;top:771px;width:8px;height:21px;background:#d6d6d6;"></div>
<div class="a" style="left:617px;top:771px;width:965px;height:20px;background:#f8f8f8;"></div>
<div class="a" style="left:1582px;top:771px;width:8px;height:21px;background:#d6d6d6;"></div>
<div class="a" style="left:617px;top:790px;width:965px;height:2px;background:#666;"></div>
<div class="a" style="left:609px;top:792px;width:973px;height:15px;background:#cccccc;"></div>
<div class="a" style="left:610px;top:792px;width:6px;height:15px;background:#1473e6;border-radius:4px 0 0 4px"></div>
<div class="a" style="left:1583px;top:792px;width:6px;height:15px;background:#1473e6;border-radius:0 4px 4px 0"></div>
<div class="a" style="left:609px;top:807px;width:982px;height:1px;background:#7a7a7a;"></div>
<div class="t" style="left:609px;top:774.6px;font-size:10px;color:#777;letter-spacing:-0.3px">0:00</div>
<div class="a" style="left:681px;top:785px;width:1px;height:5px;background:#666;"></div>
<div class="t" style="left:381px;width:600px;text-align:center;top:774.6px;font-size:10px;color:#666;letter-spacing:-0.3px">02s</div>
<div class="a" style="left:746px;top:785px;width:1px;height:5px;background:#666;"></div>
<div class="t" style="left:446px;width:600px;text-align:center;top:774.6px;font-size:10px;color:#666;letter-spacing:-0.3px">04s</div>
<div class="a" style="left:810px;top:785px;width:1px;height:5px;background:#666;"></div>
<div class="t" style="left:510px;width:600px;text-align:center;top:774.6px;font-size:10px;color:#666;letter-spacing:-0.3px">06s</div>
<div class="a" style="left:874px;top:785px;width:1px;height:5px;background:#666;"></div>
<div class="t" style="left:574px;width:600px;text-align:center;top:774.6px;font-size:10px;color:#666;letter-spacing:-0.3px">08s</div>
<div class="a" style="left:939px;top:785px;width:1px;height:5px;background:#666;"></div>
<div class="t" style="left:639px;width:600px;text-align:center;top:774.6px;font-size:10px;color:#666;letter-spacing:-0.3px">10s</div>
<div class="a" style="left:1003px;top:785px;width:1px;height:5px;background:#666;"></div>
<div class="t" style="left:703px;width:600px;text-align:center;top:774.6px;font-size:10px;color:#666;letter-spacing:-0.3px">12s</div>
<div class="a" style="left:1067px;top:785px;width:1px;height:5px;background:#666;"></div>
<div class="t" style="left:767px;width:600px;text-align:center;top:774.6px;font-size:10px;color:#666;letter-spacing:-0.3px">14s</div>
<div class="a" style="left:1132px;top:785px;width:1px;height:5px;background:#666;"></div>
<div class="t" style="left:832px;width:600px;text-align:center;top:774.6px;font-size:10px;color:#666;letter-spacing:-0.3px">16s</div>
<div class="a" style="left:1196px;top:785px;width:1px;height:5px;background:#666;"></div>
<div class="t" style="left:896px;width:600px;text-align:center;top:774.6px;font-size:10px;color:#666;letter-spacing:-0.3px">18s</div>
<div class="a" style="left:1260px;top:785px;width:1px;height:5px;background:#666;"></div>
<div class="t" style="left:960px;width:600px;text-align:center;top:774.6px;font-size:10px;color:#666;letter-spacing:-0.3px">20s</div>
<div class="a" style="left:1325px;top:785px;width:1px;height:5px;background:#666;"></div>
<div class="t" style="left:1025px;width:600px;text-align:center;top:774.6px;font-size:10px;color:#666;letter-spacing:-0.3px">22s</div>
<div class="a" style="left:1389px;top:785px;width:1px;height:5px;background:#666;"></div>
<div class="t" style="left:1089px;width:600px;text-align:center;top:774.6px;font-size:10px;color:#666;letter-spacing:-0.3px">24s</div>
<div class="a" style="left:1453px;top:785px;width:1px;height:5px;background:#666;"></div>
<div class="t" style="left:1153px;width:600px;text-align:center;top:774.6px;font-size:10px;color:#666;letter-spacing:-0.3px">26s</div>
<div class="a" style="left:1518px;top:785px;width:1px;height:5px;background:#666;"></div>
<div class="t" style="left:1218px;width:600px;text-align:center;top:774.6px;font-size:10px;color:#666;letter-spacing:-0.3px">28s</div>
<div class="a" style="left:1582px;top:785px;width:1px;height:5px;background:#666;"></div>
<div class="t" style="left:1571px;top:774.6px;font-size:10px;color:#666;letter-spacing:-0.3px">30s</div>
<div class="a" style="left:1582px;top:785px;width:1px;height:6px;background:#666;"></div>
<div class="a" style="left:617px;top:808px;width:965px;height:3px;background:#0a1ec8;"></div>
<svg class="a" style="left:617px;top:808px;" width="18" height="3" viewBox="0 0 18 3"><rect width="18" height="3" fill="#00c000"/><rect x="3" width="2" height="3" fill="#0000a0"/><rect x="8" width="2" height="3" fill="#0000a0"/><rect x="13" width="2" height="3" fill="#0000a0"/></svg>
<div class="a" style="left:608px;top:811px;width:974px;height:201px;background:#eaeaea;"></div>
<div class="a" style="left:608px;top:811px;width:9px;height:201px;background:#d6d6d6;"></div>
<div class="a" style="left:617px;top:828px;width:973px;height:1px;background:#d2d2d2;"></div>
<div class="a" style="left:617px;top:845px;width:973px;height:1px;background:#d2d2d2;"></div>
<div class="a" style="left:617px;top:862px;width:973px;height:1px;background:#d2d2d2;"></div>
<div class="a" style="left:617px;top:879px;width:973px;height:1px;background:#d2d2d2;"></div>
<div class="a" style="left:617px;top:896px;width:973px;height:1px;background:#d2d2d2;"></div>
<div class="a" style="left:617px;top:913px;width:973px;height:1px;background:#d2d2d2;"></div>
<div class="a" style="left:617px;top:930px;width:973px;height:1px;background:#d2d2d2;"></div>
<div class="a" style="left:617px;top:813px;width:965px;height:14px;background:#b8b8d0;"></div>
<div class="a" style="left:617px;top:830px;width:965px;height:14px;background:#c06868;"></div>
<div class="a" style="left:617px;top:881px;width:965px;height:14px;background:#7a3636;"></div>
<div class="a" style="left:617px;top:881px;width:965px;height:14px;background:repeating-linear-gradient(90deg,rgba(0,0,0,0.06) 0 1px,transparent 1px 3px)"></div>
<div class="a" style="left:1582px;top:811px;width:8px;height:17px;background:#e0e0e0;"></div>
<div class="a" style="left:1582px;top:828px;width:8px;height:17px;background:#e0e0e0;"></div>
<div class="a" style="left:1582px;top:879px;width:8px;height:17px;background:#e0e0e0;"></div>
<svg class="a" style="left:621px;top:848px;" width="8" height="11" viewBox="0 0 8 11"><path d="M1 0.5H7M4 0.5V10.5M1 10.5H7" stroke="#777" stroke-width="1"/></svg>
<svg class="a" style="left:621px;top:865px;" width="8" height="11" viewBox="0 0 8 11"><path d="M1 0.5H7M4 0.5V10.5M1 10.5H7" stroke="#777" stroke-width="1"/></svg>
<svg class="a" style="left:621px;top:899px;" width="8" height="11" viewBox="0 0 8 11"><path d="M1 0.5H7M4 0.5V10.5M1 10.5H7" stroke="#777" stroke-width="1"/></svg>
<svg class="a" style="left:621px;top:916px;" width="8" height="11" viewBox="0 0 8 11"><path d="M1 0.5H7M4 0.5V10.5M1 10.5H7" stroke="#777" stroke-width="1"/></svg>
<svg class="a" style="left:1592px;top:793px;" width="12" height="14" viewBox="0 0 12 14"><path d="M0.5 0.5H11.5V9L6 13.5L0.5 9Z" fill="#6e6e6e"/></svg>
<div class="a" style="left:1590px;top:810px;width:17px;height:1px;background:#e0e0e0;"></div>
<svg class="a" style="left:1590px;top:813px;" width="15" height="14" viewBox="0 0 15 14"><path d="M5 1L1 9L6 10" fill="none" stroke="#555" stroke-width="1.2"/><rect x="8" y="3" width="6" height="6" fill="#666"/><circle cx="6" cy="10" r="2.8" fill="#fff" stroke="#555"/></svg>
<div class="a" style="left:624.3px;top:785px;width:1.6px;height:228px;background:#1473e6"></div>
<svg class="a" style="left:619px;top:777px;" width="13" height="14" viewBox="0 0 13 14"><path d="M0.5 0.5H12.5V7.5L6.5 13.5L0.5 7.5Z" fill="#1473e6"/><path d="M4.5 6H8.5M6.5 6V11" stroke="#fff" stroke-width="1.1"/></svg>
<div class="a" style="left:623px;top:803px;width:133px;height:20px;background:#fbfbfb;border:1px solid #e8e8e8;border-radius:3px;box-shadow:2px 2px 3px rgba(0,0,0,0.45)"></div>
<div class="t" style="left:629px;top:807.5px;font-size:12px;color:#333;letter-spacing:0px">Current Time Indicator</div>
<div class="a" style="left:3px;top:1013px;width:713px;height:1px;background:#9a9a9a;"></div>
<svg class="a" style="left:7px;top:1016px;" width="13" height="13" viewBox="0 0 13 13"><rect x="0.5" y="0.5" width="8" height="8" fill="none" stroke="#555"/><rect x="3.5" y="3.5" width="8.5" height="8.5" fill="#f8f8f8" stroke="#555"/><path d="M7.75 6V10M5.75 8H9.75" stroke="#555" stroke-width="0.9"/></svg>
<div class="a" style="left:24px;top:1014px;width:18px;height:16px;background:#dcdcdc;"></div>
<svg class="a" style="left:26px;top:1016px;" width="14" height="13" viewBox="0 0 14 13"><circle cx="5" cy="5" r="4.3" fill="none" stroke="#555" stroke-width="1.1"/><rect x="5" y="5" width="7.5" height="7.5" fill="#f8f8f8" stroke="#555" stroke-width="1.1"/><path d="M5 5H8.5L5 8.5Z" fill="#555"/></svg>
<svg class="a" style="left:45px;top:1015px;" width="12" height="14" viewBox="0 0 12 14"><path d="M4 1C2 1 2.5 3 2.5 5C2.5 6.5 1 7 0.5 7C1 7 2.5 7.5 2.5 9C2.5 11 2 13 4 13M8 1C10 1 9.5 3 9.5 5C9.5 6.5 11 7 11.5 7C11 7 9.5 7.5 9.5 9C9.5 11 10 13 8 13" fill="none" stroke="#555" stroke-width="1.2"/></svg>
<svg class="a" style="left:64px;top:1015px;" width="16" height="13" viewBox="0 0 16 13"><circle cx="5.5" cy="6" r="4.5" fill="#555"/><rect x="0" y="10.5" width="13" height="1.5" fill="#555"/><path d="M11 2L12 8M12 2L14.5 4" stroke="#555" stroke-width="1.1"/></svg>
<div class="t" style="left:105px;top:1017.5px;font-size:11px;color:#555;letter-spacing:-0.25px">Frame Render Time:</div>
<div class="t" style="left:208px;top:1017.5px;font-size:11px;color:#3bb87a;font-weight:bold;letter-spacing:-0.3px">1ms</div>
<div class="t" style="left:310px;top:1017.0px;font-size:11px;color:#555;letter-spacing:-0.05px">Toggle Switches / Modes</div>
<svg class="a" style="left:613px;top:1018px;" width="10" height="6" viewBox="0 0 10 6"><path d="M0.5 5.5L5 1L9.5 5.5Z" fill="#555"/></svg>
<svg class="a" style="left:630px;top:1016px;" width="12" height="12" viewBox="0 0 12 12"><circle cx="6" cy="6" r="4.5" fill="#fff" stroke="#555" stroke-width="1.6"/></svg>
<div class="a" style="left:645px;top:1021px;width:45px;height:1px;background:#bbb;"></div>
<svg class="a" style="left:694px;top:1015px;" width="18" height="10" viewBox="0 0 18 10"><path d="M0.5 9.5L7 2L12 7L10 9.5Z M6 9.5L11.5 2L17.5 9.5Z" fill="#555"/></svg>
<svg class="a" style="left:16px;top:1038px;" width="34" height="32" viewBox="0 0 34 32"><defs><linearGradient id="mg" x1="0" y1="0" x2="0" y2="1"><stop offset="0" stop-color="#f5c030"/><stop offset="1" stop-color="#e88010"/></linearGradient></defs><path d="M3 18C6 22 13 22 17 18C20 15 22 12 21 8C26 14 24 26 14 28C8 29 4 25 3 18Z" fill="url(#mg)"/><circle cx="22" cy="8" r="8" fill="#f4a0a8"/><text x="22" y="12" font-size="11" fill="#000" text-anchor="middle" font-family="Liberation Sans">4</text></svg>
<div class="t" style="left:51px;top:1042.0px;font-size:12px;color:#fff;letter-spacing:-0.2px">9°C</div>
<div class="t" style="left:51px;top:1058.0px;font-size:12px;color:#f0e0e4;letter-spacing:-0.1px">Clear</div>
<svg class="a" style="left:660px;top:1043px;" width="25" height="25" viewBox="0 0 25 25"><rect x="0" y="0" width="11.5" height="11.5" fill="#4cc2ff"/><rect x="12.5" y="0" width="11.5" height="11.5" fill="#4cc2ff"/><rect x="0" y="12.5" width="11.5" height="11.5" fill="#3ab0f0"/><rect x="12.5" y="12.5" width="11.5" height="11.5" fill="#3ab0f0"/></svg>
<div class="a" style="left:697px;top:1040px;width:220px;height:32px;background:#9b2a4b;border-radius:16px;border:1px solid #a8405c"></div>
<svg class="a" style="left:708px;top:1046px;" width="20" height="20" viewBox="0 0 20 20"><circle cx="8" cy="8" r="6" fill="none" stroke="#fff" stroke-width="1.8"/><path d="M12.5 12.5L18 18" stroke="#fff" stroke-width="1.8"/></svg>
<div class="t" style="left:734px;top:1049.4px;font-size:14px;color:#f2dde3;letter-spacing:0px">Search</div>
<svg class="a" style="left:929px;top:1045px;" width="25" height="23" viewBox="0 0 25 23"><rect x="0" y="6" width="18" height="16" rx="1.5" fill="#666"/><rect x="7" y="0" width="18" height="16" rx="1.5" fill="#f0f0f0"/><rect x="7" y="6" width="11" height="10" fill="#aaa"/></svg>
<svg class="a" style="left:973px;top:1045px;" width="25" height="23" viewBox="0 0 25 23"><path d="M0 2a2 2 0 0 1 2-2H9L11 3H23a2 2 0 0 1 2 2V21a2 2 0 0 1-2 2H2a2 2 0 0 1-2-2Z" fill="#f0c030"/><path d="M0 6H25V21a2 2 0 0 1-2 2H2a2 2 0 0 1-2-2Z" fill="#ffd84a"/><rect x="5" y="14" width="15" height="9" rx="2" fill="#1a80d0"/></svg>
<svg class="a" style="left:1017px;top:1044px;" width="25" height="25" viewBox="0 0 25 25"><circle cx="12.5" cy="12.5" r="12.5" fill="#5865f2"/><path d="M6.5 8C8.5 7 10 6.8 10.5 7L11 8H14L14.5 7C15 6.8 16.5 7 18.5 8C19.5 10 20 13 19.8 16C18.5 17 17.3 17.5 16 17.7L15.3 16.5C14 16.8 11 16.8 9.7 16.5L9 17.7C7.7 17.5 6.5 17 5.2 16C5 13 5.5 10 6.5 8Z" fill="#fff"/><circle cx="10" cy="13" r="1.4" fill="#5865f2"/><circle cx="15" cy="13" r="1.4" fill="#5865f2"/></svg>
<svg class="a" style="left:1061px;top:1044px;" width="24" height="24" viewBox="0 0 24 24"><defs><linearGradient id="ig" x1="0" y1="1" x2="1" y2="0"><stop offset="0" stop-color="#fdb040"/><stop offset="0.45" stop-color="#e2264a"/><stop offset="1" stop-color="#8a3ac0"/></linearGradient></defs><rect width="24" height="24" rx="6" fill="url(#ig)"/><rect x="5" y="5" width="14" height="14" rx="4" fill="none" stroke="#fff" stroke-width="1.8"/><circle cx="12" cy="12" r="3.3" fill="none" stroke="#fff" stroke-width="1.8"/><circle cx="16.3" cy="7.7" r="1" fill="#fff"/></svg>
<svg class="a" style="left:1105px;top:1044px;" width="24" height="24" viewBox="0 0 24 24"><defs><linearGradient id="sg" x1="0" y1="0" x2="0" y2="1"><stop offset="0" stop-color="#111a40"/><stop offset="1" stop-color="#1a6ab0"/></linearGradient></defs><circle cx="12" cy="12" r="12" fill="url(#sg)"/><circle cx="15.5" cy="8.5" r="3.5" fill="none" stroke="#fff" stroke-width="1.6"/><path d="M1 13L8 16L14 10" stroke="#fff" stroke-width="3" fill="none"/><circle cx="8" cy="16" r="2.5" fill="#fff"/></svg>
<svg class="a" style="left:1149px;top:1044px;" width="24" height="24" viewBox="0 0 24 24"><circle cx="12" cy="12" r="11.5" fill="#1ed760"/><path d="M5.5 8.5C10 7 15 7.5 18.5 9.5M6.5 12C10 11 14 11.5 17 13M7.5 15.3C10 14.6 13 15 15.3 16.2" stroke="#111" stroke-width="1.8" fill="none" stroke-linecap="round"/></svg>
<div class="a" style="left:1158px;top:1072px;width:6px;height:2px;border-radius:1px;background:#c8a0b0;"></div>
<svg class="a" style="left:1193px;top:1044px;" width="24" height="24" viewBox="0 0 24 24"><circle cx="12" cy="12" r="12" fill="#db4437"/><path d="M12 12L1.6 6A12 12 0 0 0 6 22.4Z" fill="#0f9d58"/><path d="M12 12L6 22.4A12 12 0 0 0 24 12H12Z" fill="#ffcd40"/><path d="M12 12H24A12 12 0 0 0 22.4 6" fill="#db4437"/><circle cx="12" cy="12" r="5.5" fill="#fff"/><circle cx="12" cy="12" r="4.3" fill="#4285f4"/></svg>
<div class="a" style="left:1202px;top:1072px;width:6px;height:2px;background:#c8a0b0;"></div>
<div class="a" style="left:1229px;top:1036px;width:40px;height:39px;background:#952546;border-radius:4px;border:1px solid #a03556"></div>
<svg class="a" style="left:1238px;top:1045px;" width="23" height="22" viewBox="0 0 23 22"><rect width="23" height="22" rx="3.5" fill="#00005b"/><text x="11.5" y="15.5" font-size="12.5" font-weight="bold" fill="#9999ff" text-anchor="middle" font-family="Liberation Sans">Ae</text></svg>
<div class="a" style="left:1241px;top:1072px;width:16px;height:2.5px;background:#f060a0;"></div>
<svg class="a" style="left:1651px;top:1051px;" width="13" height="8" viewBox="0 0 13 8"><path d="M1 7L6.5 1.5L12 7" stroke="#fff" stroke-width="1.5" fill="none"/></svg>
<svg class="a" style="left:1681px;top:1048px;" width="18" height="15" viewBox="0 0 18 15"><path d="M4 13C1 13 0.5 9 3 8.5C3 5 7 3.5 9 5.5C11 3 16 4 15.5 8C18 8.5 18 13 15 13Z" fill="#d090a0"/><path d="M2 1L16 15" stroke="#f0c0d0" stroke-width="1.2"/></svg>
<div class="t" style="left:1716px;top:1043.5px;font-size:12px;color:#fff;letter-spacing:-0.3px">ENG</div>
<div class="t" style="left:1720px;top:1059.0px;font-size:12px;color:#fff;letter-spacing:-0.2px">US</div>
<svg class="a" style="left:1757px;top:1048px;" width="18" height="15" viewBox="0 0 18 15"><path d="M1 5.5C6 1 12 1 17 5.5M3.5 8C7 5 11 5 14.5 8M6 10.5C8 9 10 9 12 10.5" stroke="#fff" stroke-width="1.5" fill="none"/><circle cx="9" cy="13" r="1.5" fill="#fff"/></svg>
<svg class="a" style="left:1781px;top:1048px;" width="18" height="15" viewBox="0 0 18 15"><path d="M1 5H4L8.5 1V14L4 10H1Z" fill="none" stroke="#fff" stroke-width="1.2"/><path d="M11 4.5C12 5.5 12 9.5 11 10.5M13.5 2.5C15.5 4.5 15.5 10.5 13.5 12.5" stroke="#fff" stroke-width="1.2" fill="none"/><path d="M16 1C18.5 3.5 18.5 11.5 16 14" stroke="#d090a0" stroke-width="1" fill="none"/></svg>
<svg class="a" style="left:1805px;top:1048px;" width="18" height="15" viewBox="0 0 18 15"><rect x="1" y="4" width="14" height="9" rx="1.5" fill="none" stroke="#fff" stroke-width="1.3"/><rect x="15.5" y="7" width="2" height="3" fill="#fff"/><rect x="3" y="6" width="9" height="5" fill="#fff"/><path d="M4 0L2 4H5L3.5 7" stroke="#fff" stroke-width="1" fill="none"/></svg>
<div class="t" style="right:20px;top:1042.0px;font-size:12px;color:#fff;letter-spacing:-0.1px">7:07 PM</div>
<div class="t" style="right:19px;top:1058.0px;font-size:12px;color:#fff;letter-spacing:-0.1px">10/28/2025</div></body></html>
